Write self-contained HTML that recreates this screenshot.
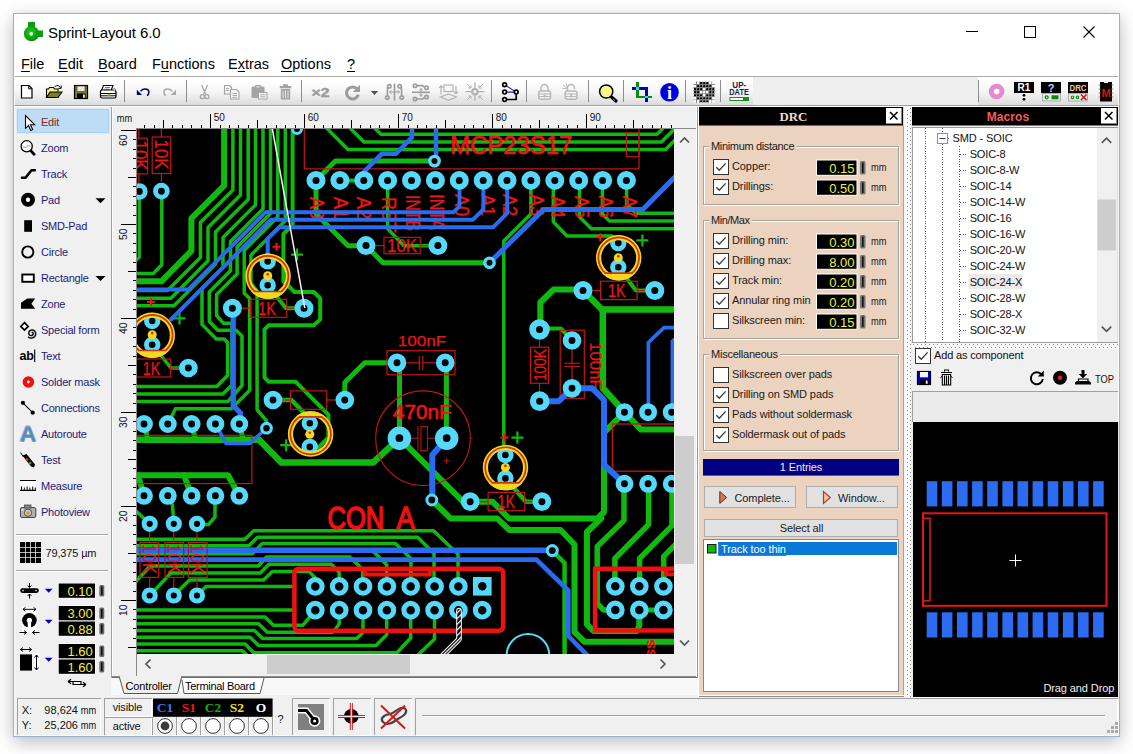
<!DOCTYPE html>
<html lang="en">
<head>
<meta charset="utf-8">
<title>Sprint-Layout 6.0</title>
<style>
html,body{margin:0;padding:0;}
body{width:1133px;height:754px;overflow:hidden;background:#fff;position:relative;
 font-family:"Liberation Sans",sans-serif;font-size:11px;color:#000;}
.abs{position:absolute;}
div,span{box-sizing:border-box;}
#shadow{position:absolute;left:14px;top:14px;width:1105px;height:722px;
 box-shadow:0 5px 17px 1px rgba(0,0,0,.27), 0 0 3px rgba(0,0,0,.10);}
#win{position:absolute;left:13px;top:13px;width:1107px;height:724px;border:1px solid #90b4e0;background:#f0f0f0;}
#title{position:absolute;left:14px;top:14px;width:1105px;height:36px;background:#fff;}
#title .cap{position:absolute;left:34px;top:9px;font-size:15px;letter-spacing:-0.1px;line-height:20px;color:#000;white-space:nowrap;}
#menu{position:absolute;left:14px;top:50px;width:1105px;height:26px;background:#fff;}
#menu span{position:absolute;top:6px;font-size:14.5px;line-height:17px;white-space:nowrap;}
#menu u{text-decoration:underline;text-underline-offset:2px;}
#toolbar{position:absolute;left:14px;top:76px;width:1105px;height:30px;
 background:linear-gradient(#fff 0,#fff 15%,#f4f4f4 55%,#dcdcdc 100%);
 border-top:1px solid #a9a9a9;border-bottom:1px solid #a0a0a0;}
</style>
</head>
<body>
<div id="shadow"></div>
<div id="win"></div>
<div id="title">
 <svg class="abs" style="left:8px;top:7px" width="24" height="22" viewBox="22 21 24 22">
  <defs><radialGradient id="gi" cx="0.45" cy="0.4" r="0.6"><stop offset="0" stop-color="#1fd01f"/><stop offset="1" stop-color="#0a8a0a"/></radialGradient></defs>
  <rect x="28" y="22" width="7" height="6" fill="#0e9a0e"/>
  <rect x="36" y="30.5" width="7" height="6.5" fill="#0e9a0e"/>
  <circle cx="31.5" cy="33.7" r="7.6" fill="url(#gi)"/>
  <circle cx="31.3" cy="33.8" r="1.9" fill="#e8ffe8"/>
 </svg>
 <div class="cap">Sprint-Layout 6.0</div>
 <svg class="abs" style="left:940px;top:0" width="165" height="36" viewBox="954 14 165 36" shape-rendering="crispEdges">
  <rect x="966" y="31" width="12" height="1" fill="#000"/>
  <rect x="1024.5" y="26.5" width="11" height="11" fill="none" stroke="#000" stroke-width="1"/>
  <path d="M1083.5 26.5 L1094.5 37.5 M1094.5 26.5 L1083.5 37.5" stroke="#000" stroke-width="1.1" fill="none" shape-rendering="geometricPrecision"/>
 </svg>
</div>
<div id="menu">
 <span style="left:7px"><u>F</u>ile</span>
 <span style="left:44px"><u>E</u>dit</span>
 <span style="left:84px"><u>B</u>oard</span>
 <span style="left:138px">F<u>u</u>nctions</span>
 <span style="left:214px">E<u>x</u>tras</span>
 <span style="left:267px"><u>O</u>ptions</span>
 <span style="left:333px"><u>?</u></span>
</div>
<div id="toolbar"></div>
<svg class="abs" style="left:14px;top:77px" width="1105" height="28" viewBox="14 77 1105 28">
 <defs>
  <linearGradient id="tbr" x1="0" y1="0" x2="0" y2="1"><stop offset="0" stop-color="#f6f6f6"/><stop offset="1" stop-color="#ececec"/></linearGradient>
 </defs>
 <rect x="753" y="77" width="225" height="28" fill="#efefef"/>
 <g stroke="#8e8e8e" stroke-width="1.4" shape-rendering="crispEdges">
  <path d="M124.5 80v22M186.5 80v22M301.5 80v22M491.5 80v22M526.5 80v22M588.5 80v22M623.5 80v22M685.5 80v22M720.5 80v22M978.5 80v22"/>
 </g>
 <!-- new -->
 <path d="M21.5 85.5h7.5l3 3v9.5h-10.500z" fill="#fff" stroke="#000" stroke-width="1.2"/>
 <path d="M28.700 85.700v3.100h3.100" fill="none" stroke="#000" stroke-width="1"/>
 <!-- open -->
 <path d="M46.500 97.500v-8.500h2l1-1.500h4l1 1.500h3.500v2.500" fill="#f4f48a" stroke="#000" stroke-width="1.100"/>
 <path d="M46.500 97.500l3.500-5.500h12l-4 5.500z" fill="#7d7d1c" stroke="#000" stroke-width="1.100"/>
 <path d="M54.500 87c1.500-2 4.500-2 6 .5M61.200 85.500v2.800h-2.800" fill="none" stroke="#000" stroke-width="1"/>
 <!-- save -->
 <rect x="74.500" y="85.500" width="13" height="13" fill="#7d7d1c" stroke="#000" stroke-width="1.200"/>
 <rect x="77" y="86" width="8" height="5.500" fill="#e8e8e8" stroke="#333" stroke-width=".6"/>
 <rect x="77" y="93.500" width="8.500" height="5" fill="#000"/>
 <rect x="83" y="94.500" width="1.800" height="3.300" fill="#e8e8e8"/>
 <!-- print -->
 <path d="M103.500 85.500h9.500l-2 5h-9.500z" fill="#fff" stroke="#000" stroke-width="1.100"/>
 <path d="M105 87.500h5M104.300 89.200h5" stroke="#555" stroke-width=".8"/>
 <path d="M100.500 91.500c0-1 .8-1.500 1.500-1.500h11.500c1.500 0 2.500 1 2.500 2v4.500c0 .8-.7 1.500-1.500 1.500h-12.500c-.8 0-1.500-.7-1.500-1.500z" fill="#fff" stroke="#000" stroke-width="1.200"/>
 <path d="M100.500 93.500h15.500M100.500 95.800h15.500" stroke="#000" stroke-width="1"/>
 <rect x="107" y="93.900" width="4" height="1.500" fill="#c8c830"/>
 <circle cx="114.300" cy="89.800" r="1.300" fill="#ddd" stroke="#444" stroke-width=".6"/>
 <!-- undo -->
 <path d="M140.500 91.200c1.500-1.500 3-2.200 4.700-2.100 2.200.1 3.700 1.500 3.700 3.200 0 1.500-.7 2.600-1.900 3.400" fill="none" stroke="#00006e" stroke-width="1.500"/>
 <path d="M136.800 89.800v5.200h5.300z" fill="#00006e"/>
 <!-- redo -->
 <path d="M172.300 91.200c-1.500-1.500-3-2.200-4.700-2.100-2.200.1-3.700 1.500-3.700 3.200 0 1.500.7 2.600 1.900 3.400" fill="none" stroke="#a8a8a8" stroke-width="1.500"/>
 <path d="M176 89.800v5.200h-5.300z" fill="#a8a8a8"/>
 <!-- cut -->
 <g fill="none" stroke="#a4a4a4" stroke-width="1.200">
  <path d="M201.700 85l4 9.500M207.500 85l-4 9.500"/>
  <circle cx="202.300" cy="96.700" r="2"/><circle cx="206.900" cy="96.700" r="2"/>
 </g>
 <!-- copy -->
 <g fill="#f4f4f4" stroke="#a4a4a4" stroke-width="1.100">
  <path d="M224.500 85.500h5l2 2v6.500h-7z"/>
  <path d="M230.500 89.500h6l2.500 2.500v7h-8.500z"/>
  <path d="M226 88.500h3M226 90.500h3M232.500 93.500h4.500M232.500 95.500h4.500M232.500 97.300h4.500" stroke-width=".9"/>
 </g>
 <!-- paste -->
 <g>
  <rect x="251.500" y="86.500" width="13" height="11.500" rx="1.500" fill="#a4a4a4"/>
  <rect x="255" y="85" width="6" height="3" rx="1" fill="#a4a4a4"/>
  <rect x="256.500" y="86.200" width="3" height="1.200" fill="#eee"/>
  <rect x="258.500" y="92.500" width="8.500" height="6.500" fill="#f4f4f4" stroke="#a4a4a4" stroke-width="1"/>
  <path d="M260.300 94.800h5M260.300 96.800h5" stroke="#a4a4a4" stroke-width=".9"/>
 </g>
 <!-- delete -->
 <g fill="#a4a4a4">
  <rect x="283" y="84.300" width="5" height="2"/>
  <rect x="279.800" y="86" width="11.400" height="2.300"/>
  <path d="M280.800 89h9.400v10.500h-9.400z"/>
  <path d="M283 90.500v7.500M285.500 90.500v7.500M288 90.500v7.500" stroke="#eee" stroke-width=".9"/>
 </g>

 <!-- x2 -->
 <text x="311.500" y="97" font-family="Liberation Sans,sans-serif" font-weight="bold" font-size="13.500" fill="#9c9c9c" stroke="#9c9c9c" stroke-width=".5" textLength="18" lengthAdjust="spacingAndGlyphs">×2</text>
 <!-- rotate -->
 <path d="M357.300 89.300a6 6 0 1 0 1 5.300" fill="none" stroke="#9c9c9c" stroke-width="3.100"/>
 <path d="M360 84.800v7.200h-7.200z" fill="#9c9c9c"/>
 <path d="M370.800 91l3.700 4 3.700-4z" fill="#555"/>
 <!-- mirror h -->
 <g fill="none" stroke="#9e9e9e" stroke-width="1.700">
  <path d="M394.500 83.500v17"/>
  <circle cx="389.300" cy="86.300" r="1.700"/><circle cx="387.300" cy="97.500" r="1.700"/>
  <circle cx="399.700" cy="86.300" r="1.700"/><circle cx="401.700" cy="97.500" r="1.700"/>
  <path d="M387.600 87.500l-.3 8.300M401.400 87.500l.3 8.300" />
  <path d="M389.500 92h10M389.500 92l2-1.700M389.500 92l2 1.700M399.500 92l-2-1.700M399.500 92l-2 1.700" stroke-width="1"/>
 </g>
 <!-- mirror v -->
 <g fill="none" stroke="#9e9e9e" stroke-width="1.700">
  <path d="M412 92.300h18"/>
  <circle cx="415" cy="85.700" r="1.700"/><circle cx="426.500" cy="87.700" r="1.700"/>
  <circle cx="415" cy="99" r="1.700"/><circle cx="426.500" cy="97" r="1.700"/>
  <path d="M416.700 85.700h6l2 1.500M416.700 99h6l2-1.500"/>
  <path d="M421 88.500v7.800M421 88.500l-1.700 2M421 88.500l1.700 2M421 96.300l-1.700-2M421 96.300l1.700-2" stroke-width="1"/>
 </g>
 <!-- send back -->
 <g fill="none" stroke="#b4b4b4" stroke-width="1.200">
  <rect x="444" y="85" width="9" height="6.500"/>
  <path d="M448.500 94l8 3-8 3.300-8-3.300z"/>
  <path d="M441 94.500v-9M441 85.500l-2 2.500M441 85.500l2 2.500M456 86v8M456 94l-2-2.500M456 94l2-2.500"/>
 </g>
 <!-- snap -->
 <g fill="none" stroke="#b0b0b0" stroke-width="1.300">
  <path d="M474.900 82.500v6M474.900 95v6M465.500 91.700h6M478.300 91.700h6"/>
  <circle cx="474.900" cy="91.700" r="2.700" stroke-width="2.200"/>
  <path d="M467 84l4 4M471 88v-2.800M471 88h-2.800M483 84l-4 4M479 88v-2.800M479 88h2.800M467 100l4-4M471 96v2.800M471 96h-2.800M483 100l-4-4M479 96v2.800M479 96h2.800" stroke-width="1"/>
 </g>
 <!-- connections -->
 <g fill="none">
  <path d="M504.600 84.800l11.600 7.300M504.600 92.100h11.600" stroke="#2222b0" stroke-width="1.100"/>
  <path d="M504.600 99.500h11.600v-7.400" stroke="#000" stroke-width="1.700"/>
  <g stroke="#000" stroke-width="1.700" fill="#fff">
  <circle cx="504.600" cy="84.800" r="1.900"/><circle cx="504.600" cy="92.100" r="1.900"/><circle cx="504.600" cy="99.500" r="1.900"/><circle cx="516.200" cy="92.100" r="1.900"/></g>
 </g>
 <!-- lock -->
 <g fill="none" stroke="#b8b8b8" stroke-width="1.500">
  <path d="M541 91v-3a3.500 3.500 0 0 1 7 0v3"/>
  <rect x="538.700" y="91" width="11.800" height="8.300" rx="2" fill="#f2f2f2"/>
  <path d="M539 94h11M539 96.500h11" stroke-width="1"/>
  <path d="M544.600 93.500v4" stroke-width="1.600"/>
 </g>
 <g fill="none" stroke="#b8b8b8" stroke-width="1.500">
  <path d="M567.500 91v-3a3.500 3.500 0 0 1 7 0v1"/>
  <rect x="565.200" y="91" width="11.800" height="8.300" rx="2" fill="#f2f2f2"/>
  <path d="M565.500 94h11M565.500 96.500h11" stroke-width="1"/>
  <path d="M571.100 93.500v4" stroke-width="1.600"/>
  <path d="M563 85l4 3M566 83.500l1.500 4M562.500 88.500h4" stroke-width="1"/>
 </g>
 <!-- magnifier -->
 <path d="M611.500 97l4.500 4" stroke="#000" stroke-width="3.200" stroke-linecap="round"/>
 <path d="M612.800 98.700l2.200 2" stroke="#aaa" stroke-width=".8"/>
 <circle cx="606.200" cy="91.500" r="6.600" fill="#f6f68c" stroke="#000" stroke-width="1.500"/>
 <!-- crop -->
 <g fill="none" stroke-width="2.700" shape-rendering="crispEdges">
  <path d="M637.700 82v15h14" stroke="#0a8a14"/>
  <path d="M632 88.500h14.500v13" stroke="#0000d0"/>
  <rect x="636.300" y="87.100" width="2.800" height="2.800" fill="#20e0f0" stroke="none"/>
  <rect x="645.100" y="95.600" width="2.800" height="2.800" fill="#20e0f0" stroke="none"/>
 </g>
 <!-- info -->
 <circle cx="669.500" cy="92.300" r="9.300" fill="#0000e6"/>
 <text x="669.600" y="99" text-anchor="middle" font-family="Liberation Serif,serif" font-weight="bold" font-size="18" fill="#fff">i</text>
 <!-- dotted disc -->
 <rect x="693.300" y="81.300" width="21.700" height="21.700" rx="3" fill="#fff"/>
 <path d="M696.52 81.40V102.90M693.40 84.53H714.90M699.58 81.40V102.90M693.40 87.58H714.90M702.62 81.40V102.90M693.40 90.62H714.90M705.67 81.40V102.90M693.40 93.67H714.90M708.73 81.40V102.90M693.40 96.72H714.90M711.77 81.40V102.90M693.40 99.78H714.90" stroke="#808080" stroke-width="1"/>
 <rect x="693.95" y="81.95" width="2.100" height="2.100" fill="#fff"/><rect x="697.00" y="81.95" width="2.100" height="2.100" fill="#fff"/><rect x="700.05" y="81.95" width="2.100" height="2.100" rx=".4" fill="#000"/><rect x="703.10" y="81.95" width="2.100" height="2.100" rx=".4" fill="#000"/><rect x="706.15" y="81.95" width="2.100" height="2.100" rx=".4" fill="#000"/><rect x="709.20" y="81.95" width="2.100" height="2.100" fill="#fff"/><rect x="712.25" y="81.95" width="2.100" height="2.100" fill="#fff"/><rect x="693.95" y="85.00" width="2.100" height="2.100" fill="#fff"/><rect x="697.00" y="85.00" width="2.100" height="2.100" rx=".4" fill="#000"/><rect x="700.05" y="85.00" width="2.100" height="2.100" rx=".4" fill="#000"/><rect x="703.10" y="85.00" width="2.100" height="2.100" rx=".4" fill="#000"/><rect x="706.15" y="85.00" width="2.100" height="2.100" rx=".4" fill="#000"/><rect x="709.20" y="85.00" width="2.100" height="2.100" rx=".4" fill="#000"/><rect x="712.25" y="85.00" width="2.100" height="2.100" fill="#fff"/><rect x="693.95" y="88.05" width="2.100" height="2.100" rx=".4" fill="#000"/><rect x="697.00" y="88.05" width="2.100" height="2.100" rx=".4" fill="#000"/><rect x="700.05" y="88.05" width="2.100" height="2.100" rx=".4" fill="#000"/><rect x="703.10" y="88.05" width="2.100" height="2.100" fill="#fff"/><rect x="706.15" y="88.05" width="2.100" height="2.100" rx=".4" fill="#000"/><rect x="709.20" y="88.05" width="2.100" height="2.100" rx=".4" fill="#000"/><rect x="712.25" y="88.05" width="2.100" height="2.100" rx=".4" fill="#000"/><rect x="693.95" y="91.10" width="2.100" height="2.100" rx=".4" fill="#000"/><rect x="697.00" y="91.10" width="2.100" height="2.100" rx=".4" fill="#000"/><rect x="700.05" y="91.10" width="2.100" height="2.100" fill="#fff"/><rect x="703.10" y="91.10" width="2.100" height="2.100" fill="#fff"/><rect x="706.15" y="91.10" width="2.100" height="2.100" fill="#fff"/><rect x="709.20" y="91.10" width="2.100" height="2.100" rx=".4" fill="#000"/><rect x="712.25" y="91.10" width="2.100" height="2.100" rx=".4" fill="#000"/><rect x="693.95" y="94.15" width="2.100" height="2.100" rx=".4" fill="#000"/><rect x="697.00" y="94.15" width="2.100" height="2.100" rx=".4" fill="#000"/><rect x="700.05" y="94.15" width="2.100" height="2.100" rx=".4" fill="#000"/><rect x="703.10" y="94.15" width="2.100" height="2.100" fill="#fff"/><rect x="706.15" y="94.15" width="2.100" height="2.100" rx=".4" fill="#000"/><rect x="709.20" y="94.15" width="2.100" height="2.100" rx=".4" fill="#000"/><rect x="712.25" y="94.15" width="2.100" height="2.100" rx=".4" fill="#000"/><rect x="693.95" y="97.20" width="2.100" height="2.100" fill="#fff"/><rect x="697.00" y="97.20" width="2.100" height="2.100" rx=".4" fill="#000"/><rect x="700.05" y="97.20" width="2.100" height="2.100" rx=".4" fill="#000"/><rect x="703.10" y="97.20" width="2.100" height="2.100" rx=".4" fill="#000"/><rect x="706.15" y="97.20" width="2.100" height="2.100" rx=".4" fill="#000"/><rect x="709.20" y="97.20" width="2.100" height="2.100" rx=".4" fill="#000"/><rect x="712.25" y="97.20" width="2.100" height="2.100" fill="#fff"/><rect x="693.95" y="100.25" width="2.100" height="2.100" fill="#fff"/><rect x="697.00" y="100.25" width="2.100" height="2.100" fill="#fff"/><rect x="700.05" y="100.25" width="2.100" height="2.100" rx=".4" fill="#000"/><rect x="703.10" y="100.25" width="2.100" height="2.100" rx=".4" fill="#000"/><rect x="706.15" y="100.25" width="2.100" height="2.100" rx=".4" fill="#000"/><rect x="709.20" y="100.25" width="2.100" height="2.100" fill="#fff"/><rect x="712.25" y="100.25" width="2.100" height="2.100" fill="#fff"/>
 <!-- update -->
 <g font-family="Liberation Sans,sans-serif" font-weight="bold" font-size="8.300" fill="#1a1a50">
  <text x="732.300" y="88.300" textLength="14" lengthAdjust="spacingAndGlyphs">UP-</text>
  <text x="729.300" y="95" textLength="19.500" lengthAdjust="spacingAndGlyphs">DATE</text>
 </g>
 <rect x="729.500" y="97" width="19.500" height="4" fill="#1a8a1a"/>
 <rect x="730.500" y="98" width="12.500" height="2" fill="#fff"/>
 <!-- right group -->
 <circle cx="996.600" cy="91.500" r="5.300" fill="#fff" stroke="#e58ad0" stroke-width="5"/>
 <rect x="1014" y="82" width="20" height="11" fill="#000"/>
 <text x="1024" y="91.300" text-anchor="middle" font-family="Liberation Sans,sans-serif" font-weight="bold" font-size="10" fill="#fff">R1</text>
 <circle cx="1024" cy="95.300" r="1.400" fill="#000"/><circle cx="1024" cy="99.300" r="1.400" fill="#000"/>
 <rect x="1041" y="82" width="20" height="11" fill="#000"/>
 <text x="1051" y="91.800" text-anchor="middle" font-family="Liberation Sans,sans-serif" font-weight="bold" font-size="11" fill="#bcd4ff">?</text>
 <rect x="1042.500" y="93.500" width="18" height="7.500" fill="#e8e8e8" stroke="#888" stroke-width=".6"/>
 <circle cx="1046.700" cy="97.300" r="1.500" fill="none" stroke="#0a8a0a" stroke-width="1.300"/>
 <rect x="1051.500" y="95.300" width="7" height="4" fill="#0a8a0a"/>
 <rect x="1068" y="82" width="20" height="11" fill="#000"/>
 <text x="1078" y="91.300" text-anchor="middle" font-family="Liberation Sans,sans-serif" font-weight="bold" font-size="9.500" fill="#f0c890" textLength="17" lengthAdjust="spacingAndGlyphs">DRC</text>
 <rect x="1068.500" y="93.500" width="19" height="7.500" fill="#e8e8e8" stroke="#888" stroke-width=".6"/>
 <circle cx="1072.500" cy="97.300" r="1.300" fill="none" stroke="#0a8a0a" stroke-width="1.100"/>
 <circle cx="1077.500" cy="97.300" r="1.300" fill="none" stroke="#0a8a0a" stroke-width="1.100"/>
 <path d="M1081 94.500l5.500 5.500M1086.500 94.500l-5.500 5.500" stroke="#d01010" stroke-width="1.600"/>
 <rect x="1100" y="82" width="12" height="19.500" fill="#000"/>
 <rect x="1104" y="81" width="4" height="2" fill="#f0f0f0"/>
 <path d="M1098.500 85h2M1098.500 89h2M1098.500 93h2M1098.500 97h2M1111.500 85h2M1111.500 89h2M1111.500 93h2M1111.500 97h2" stroke="#999" stroke-width="1"/>
 <text x="1106" y="96.500" text-anchor="middle" font-family="Liberation Sans,sans-serif" font-weight="bold" font-size="11" fill="#e01010">M</text>
</svg>
<svg class="abs" style="left:14px;top:106px" width="98" height="630" viewBox="14 106 98 630" font-family="Liberation Sans,sans-serif" font-size="11">
<rect x="16.500" y="108.500" width="93" height="25" fill="#bddcf5" stroke="#dcedfa" stroke-width="1"/>
<rect x="17.500" y="109.500" width="91" height="23" fill="none" stroke="#a9d0ef" stroke-width="1"/>
<text x="41" y="126" fill="#8a2626" letter-spacing="-0.22">Edit</text>
<text x="41" y="152" fill="#1c1c78" letter-spacing="-0.22">Zoom</text>
<text x="41" y="178" fill="#1c1c78" letter-spacing="-0.22">Track</text>
<text x="41" y="204" fill="#1c1c78" letter-spacing="-0.22">Pad</text>
<text x="41" y="230" fill="#1c1c78" letter-spacing="-0.22">SMD-Pad</text>
<text x="41" y="256" fill="#1c1c78" letter-spacing="-0.22">Circle</text>
<text x="41" y="282" fill="#1c1c78" letter-spacing="-0.22">Rectangle</text>
<text x="41" y="308" fill="#1c1c78" letter-spacing="-0.22">Zone</text>
<text x="41" y="334" fill="#1c1c78" letter-spacing="-0.22">Special form</text>
<text x="41" y="360" fill="#1c1c78" letter-spacing="-0.22">Text</text>
<text x="41" y="386" fill="#1c1c78" letter-spacing="-0.22">Solder mask</text>
<text x="41" y="412" fill="#1c1c78" letter-spacing="-0.22">Connections</text>
<text x="41" y="438" fill="#1c1c78" letter-spacing="-0.22">Autoroute</text>
<text x="41" y="464" fill="#1c1c78" letter-spacing="-0.22">Test</text>
<text x="41" y="490" fill="#1c1c78" letter-spacing="-0.22">Measure</text>
<text x="41" y="516" fill="#1c1c78" letter-spacing="-0.22">Photoview</text>
<path d="M25.500 115.500v12.800l3-2.800 2.300 5 1.900-.9-2.300-4.900h4.300z" fill="#fff" stroke="#000" stroke-width="1.100" stroke-linejoin="miter"/>
<path d="M30.800 150.800l3.300 3.400" stroke="#000" stroke-width="2.800" stroke-linecap="round"/>
<circle cx="26.700" cy="146.300" r="5.600" fill="#fff" stroke="#000" stroke-width="1.300"/>
<path d="M22.800 147.500c1-2 2.500 1 3.800-.5s2.500-1.500 3.800-1" fill="none" stroke="#888" stroke-width="1"/>
<path d="M22 177.800h3.500l6-7.500h3.300" fill="none" stroke="#000" stroke-width="2.600" stroke-linecap="round" stroke-linejoin="round"/>
<circle cx="28" cy="199.800" r="4.600" fill="#fff" stroke="#000" stroke-width="4.800"/>
<path d="M95.500 198.300h10l-5 5z" fill="#000"/>
<rect x="24.200" y="220.200" width="7.800" height="11.600" fill="#000"/>
<circle cx="27.800" cy="252" r="5.600" fill="none" stroke="#000" stroke-width="1.900"/>
<rect x="22.300" y="274.500" width="11.500" height="7.300" fill="#fff" stroke="#000" stroke-width="1.900"/>
<path d="M95.500 276h10l-5 5z" fill="#000"/>
<path d="M21 308.800v-6l6.200-4.300h8l-3.800 5.300 3.800 5z" fill="#000"/>
<path d="M24.500 322.700l3.700 3.700-3.700 3.700-3.700-3.700z" fill="#fff" stroke="#000" stroke-width="1.700"/>
<path d="M31.5 332.5L31.7 332.4L32.0 332.4L32.3 332.4L32.6 332.6L32.9 332.8L33.1 333.1L33.2 333.5L33.2 334.0L33.1 334.4L32.9 334.9L32.5 335.2L32.0 335.5L31.4 335.6L30.8 335.6L30.2 335.4L29.7 335.1L29.2 334.6L28.9 334.0L28.8 333.2L28.8 332.5L29.0 331.7L29.5 331.1L30.1 330.5L30.9 330.1L31.7 329.9L32.6 330.0L33.5 330.3L34.3 330.8L35.0 331.6L35.5 332.5L35.7 333.5L35.6 334.6L35.3 335.6L34.7 336.5L33.8 337.3L32.7 337.8L31.6 338.1L30.3 338.0L29.1 337.6L28.1 336.9" fill="none" stroke="#111" stroke-width="1.500"/>
<text x="19.500" y="360.300" font-weight="bold" font-size="12.500" fill="#000" letter-spacing="-0.3">ab</text>
<path d="M34.700 349.500v12.500" stroke="#000" stroke-width="1.100"/>
<circle cx="28.400" cy="382" r="3.600" fill="#fff" stroke="#f01010" stroke-width="4.400"/>
<path d="M22.900 402.800l9.800 9.900" stroke="#000" stroke-width="1.100"/>
<circle cx="22.900" cy="402.800" r="2.100" fill="#000"/><circle cx="32.700" cy="412.700" r="2.100" fill="#000"/>
<text x="19.300" y="441.200" font-weight="bold" font-size="22" fill="#5f8fbe" stroke="#8fb7dc" stroke-width=".8" textLength="17" lengthAdjust="spacingAndGlyphs">A</text>
<text x="20.300" y="441.600" font-weight="bold" font-size="22" fill="#5585b4" textLength="16" lengthAdjust="spacingAndGlyphs" opacity=".7">A</text>
<path d="M20.500 452.500l3 4.500" stroke="#000" stroke-width="1"/>
<path d="M22.500 455.500l4-1.500 8.500 10.500-1 3-3-1z" fill="#000"/>
<circle cx="27" cy="459.500" r="1.500" fill="#e03030"/><circle cx="30" cy="463" r="1.500" fill="#20a040"/>
<rect x="20" y="480.500" width="16" height="9.500" fill="#fff"/>
<path d="M20 480.500h16M20 490.300h16" stroke="#000" stroke-width="1.200"/>
<path d="M21.500 490v-3.500M24.300 490v-2.500M27.100 490v-3.500M29.900 490v-2.500M32.700 490v-3.500M35.300 490v-2.500" stroke="#000" stroke-width="1"/>
<rect x="20.500" y="507.500" width="15.300" height="10" rx="1.500" fill="#b0b0b0" stroke="#444" stroke-width="1"/>
<rect x="24.500" y="505" width="6.500" height="3" fill="#888" stroke="#444" stroke-width=".8"/>
<circle cx="28" cy="512.700" r="3.600" fill="#d8d8d8" stroke="#444" stroke-width="1"/>
<circle cx="28" cy="512.900" r="1.800" fill="#e89020"/>
<rect x="21.500" y="509" width="2" height="1.500" fill="#eee"/>
<rect x="16" y="534" width="92" height="1" fill="#a6a6a6"/><rect x="16" y="535" width="92" height="1" fill="#fff"/>
<rect x="16" y="570" width="92" height="1" fill="#a6a6a6"/><rect x="16" y="571" width="92" height="1" fill="#fff"/>
<rect x="20" y="542" width="21" height="21" fill="#000"/>
<path d="M25.500 542v21M30.500 542v21M35.500 542v21M20 547.500h21M20 552.500h21M20 557.500h21" stroke="#fff" stroke-width=".7"/>
<text x="45.500" y="557" fill="#111" font-size="11" letter-spacing="-0.15">79,375 µm</text>
<rect x="58" y="583.0" width="37.500" height="15.500" fill="#fff"/>
<rect x="58.700" y="583.5" width="36.300" height="14.300" fill="#000"/>
<text x="92.800" y="595.5" text-anchor="end" font-size="13" fill="#f2f244">0.10</text>
<rect x="99.300" y="585.0" width="5" height="11.500" rx="1.500" fill="#6a6a6a"/>
<rect x="101" y="586.5" width="1.600" height="8.500" fill="#111"/>
<rect x="58" y="605.5" width="37.500" height="15.500" fill="#fff"/>
<rect x="58.700" y="606" width="36.300" height="14.300" fill="#000"/>
<text x="92.800" y="618" text-anchor="end" font-size="13" fill="#f2f244">3.00</text>
<rect x="99.300" y="607.5" width="5" height="11.500" rx="1.500" fill="#6a6a6a"/>
<rect x="101" y="609" width="1.600" height="8.500" fill="#111"/>
<rect x="58" y="621.0" width="37.500" height="15.500" fill="#fff"/>
<rect x="58.700" y="621.5" width="36.300" height="14.300" fill="#000"/>
<text x="92.800" y="633.5" text-anchor="end" font-size="13" fill="#f2f244">0.88</text>
<rect x="99.300" y="623.0" width="5" height="11.500" rx="1.500" fill="#6a6a6a"/>
<rect x="101" y="624.5" width="1.600" height="8.500" fill="#111"/>
<rect x="58" y="643.5" width="37.500" height="15.500" fill="#fff"/>
<rect x="58.700" y="644" width="36.300" height="14.300" fill="#000"/>
<text x="92.800" y="656" text-anchor="end" font-size="13" fill="#f2f244">1.60</text>
<rect x="99.300" y="645.5" width="5" height="11.500" rx="1.500" fill="#6a6a6a"/>
<rect x="101" y="647" width="1.600" height="8.500" fill="#111"/>
<rect x="58" y="659.0" width="37.500" height="15.500" fill="#fff"/>
<rect x="58.700" y="659.5" width="36.300" height="14.300" fill="#000"/>
<text x="92.800" y="671.5" text-anchor="end" font-size="13" fill="#f2f244">1.60</text>
<rect x="99.300" y="661.0" width="5" height="11.500" rx="1.500" fill="#6a6a6a"/>
<rect x="101" y="662.5" width="1.600" height="8.500" fill="#111"/>
<path d="M44.800 588.8h7.800l-3.900 4z" fill="#0000d0"/>
<path d="M44.800 619.8h7.800l-3.900 4z" fill="#0000d0"/>
<path d="M44.800 657.8h7.800l-3.900 4z" fill="#0000d0"/>
<rect x="20.200" y="588.300" width="18.600" height="4.600" rx="2.300" fill="#000"/>
<circle cx="23" cy="590.600" r=".8" fill="#fff"/><circle cx="36" cy="590.600" r=".8" fill="#fff"/>
<path d="M29.500 583v4.500M29.500 598.500v-4.500M27.500 585.500l2 2 2-2M27.500 596l2-2 2 2" fill="none" stroke="#000" stroke-width="1"/>
<rect x="22.300" y="607" width="14" height="25" fill="#fff"/>
<circle cx="29.400" cy="620.300" r="7.300" fill="#000"/>
<circle cx="29.400" cy="620.300" r="2.600" fill="#fff"/><rect x="27.700" y="620.300" width="3.400" height="8" fill="#fff"/>
<path d="M23 609.300h13M23 609.300l2.500-2M23 609.300l2.500 2M36 609.300l-2.500-2M36 609.300l-2.500 2" stroke="#000" stroke-width="1" fill="none"/>
<path d="M19.500 632.500h7M26.500 632.500l-2.500-2M26.500 632.500l-2.500 2M39.500 632.500h-7M32.500 632.500l2.500-2M32.500 632.500l2.500 2" stroke="#000" stroke-width="1" fill="none"/>
<rect x="34" y="653" width="5.500" height="18" fill="#fff"/>
<rect x="20" y="654.400" width="12" height="16.200" fill="#000"/>
<path d="M20.500 649.500h11M20.500 649.500l2.500-2M20.500 649.500l2.500 2M31.500 649.500l-2.500-2M31.500 649.500l-2.500 2" stroke="#000" stroke-width="1" fill="none"/>
<path d="M36.500 655v15M36.500 655l-2 2.500M36.500 655l2 2.500M36.500 670l-2-2.500M36.500 670l2-2.500" stroke="#000" stroke-width="1" fill="none"/>
<path d="M68 681.500h13v3.500M68 681.500l3-2.200M68 681.500l3 2.200M86 684.500h-13v-3M86 684.500l-3-2.200M86 684.500l-3 2.200" stroke="#000" stroke-width="1.200" fill="none"/>
<rect x="17" y="698" width="1" height="38" fill="#a0a0a0"/><rect x="17" y="698" width="84" height="1" fill="#a0a0a0"/>
<rect x="100" y="699" width="1" height="37" fill="#fff"/>
<text x="21.700" y="714" fill="#111">X:</text><text x="21.700" y="728.500" fill="#111">Y:</text>
<text x="78" y="714" fill="#111" text-anchor="end">98,624</text><text x="78" y="728.500" fill="#111" text-anchor="end">25,206</text>
<text x="80.700" y="714" fill="#111" textLength="15.500" lengthAdjust="spacingAndGlyphs">mm</text><text x="80.700" y="728.500" fill="#111" textLength="15.500" lengthAdjust="spacingAndGlyphs">mm</text>
</svg>
<svg class="abs" style="left:111px;top:106px" width="587" height="630" viewBox="111 106 587 630" font-family="Liberation Sans,sans-serif" font-size="11">
<rect x="111" y="107" width="1" height="571" fill="#a0a0a0"/><rect x="112" y="107" width="1" height="570" fill="#fff"/>
<rect x="111" y="678" width="587" height="17" fill="#f8f8f8"/>
<rect x="111" y="676" width="587" height="1" fill="#8c8c8c"/><rect x="111" y="677" width="587" height="1" fill="#6e6e6e"/>
<rect x="696" y="107" width="1" height="570" fill="#fff"/><rect x="697" y="107" width="1" height="571" fill="#9a9a9a"/>
<text x="213.8" y="121" font-size="10" fill="#111">50</text>
<text x="307.8" y="121" font-size="10" fill="#111">60</text>
<text x="401.8" y="121" font-size="10" fill="#111">70</text>
<text x="495.8" y="121" font-size="10" fill="#111">80</text>
<text x="589.8" y="121" font-size="10" fill="#111">90</text>
<path d="M144.5 124.5V128M154.5 124.5V128M163.5 120V128M172.5 124.5V128M182.5 124.5V128M191.5 124.5V128M201.5 124.5V128M210.5 114V128M220.5 124.5V128M229.5 124.5V128M238.5 124.5V128M248.5 124.5V128M257.5 120V128M266.5 124.5V128M276.5 124.5V128M285.5 124.5V128M295.5 124.5V128M304.5 114V128M314.5 124.5V128M323.5 124.5V128M332.5 124.5V128M342.5 124.5V128M351.5 120V128M360.5 124.5V128M370.5 124.5V128M379.5 124.5V128M389.5 124.5V128M398.5 114V128M408.5 124.5V128M417.5 124.5V128M426.5 124.5V128M436.5 124.5V128M445.5 120V128M454.5 124.5V128M464.5 124.5V128M473.5 124.5V128M483.5 124.5V128M492.5 114V128M502.5 124.5V128M511.5 124.5V128M520.5 124.5V128M530.5 124.5V128M539.5 120V128M548.5 124.5V128M558.5 124.5V128M567.5 124.5V128M577.5 124.5V128M586.5 114V128M596.5 124.5V128M605.5 124.5V128M614.5 124.5V128M624.5 124.5V128M633.5 120V128M642.5 124.5V128M652.5 124.5V128M661.5 124.5V128M671.5 124.5V128" stroke="#000" stroke-width="1" shape-rendering="crispEdges"/>
<text x="116.800" y="121.600" font-size="10.500" fill="#111" textLength="15.300" lengthAdjust="spacingAndGlyphs">mm</text>
<text transform="translate(127.300 604.5) rotate(-90)" text-anchor="end" font-size="10.300" fill="#111">10</text>
<text transform="translate(127.300 510.5) rotate(-90)" text-anchor="end" font-size="10.300" fill="#111">20</text>
<text transform="translate(127.300 416.5) rotate(-90)" text-anchor="end" font-size="10.300" fill="#111">30</text>
<text transform="translate(127.300 322.5) rotate(-90)" text-anchor="end" font-size="10.300" fill="#111">40</text>
<text transform="translate(127.300 228.5) rotate(-90)" text-anchor="end" font-size="10.300" fill="#111">50</text>
<text transform="translate(127.300 134.5) rotate(-90)" text-anchor="end" font-size="10.300" fill="#111">60</text>
<path d="M128 647.5H136M132.5 638.5H136M132.5 628.5H136M132.5 619.5H136M132.5 609.5H136M120.5 600.5H136M132.5 591.5H136M132.5 581.5H136M132.5 572.5H136M132.5 562.5H136M128 553.5H136M132.5 544.5H136M132.5 534.5H136M132.5 525.5H136M132.5 515.5H136M120.5 506.5H136M132.5 497.5H136M132.5 487.5H136M132.5 478.5H136M132.5 468.5H136M128 459.5H136M132.5 450.5H136M132.5 440.5H136M132.5 431.5H136M132.5 421.5H136M120.5 412.5H136M132.5 403.5H136M132.5 393.5H136M132.5 384.5H136M132.5 374.5H136M128 365.5H136M132.5 356.5H136M132.5 346.5H136M132.5 337.5H136M132.5 327.5H136M120.5 318.5H136M132.5 309.5H136M132.5 299.5H136M132.5 290.5H136M132.5 280.5H136M128 271.5H136M132.5 262.5H136M132.5 252.5H136M132.5 243.5H136M132.5 233.5H136M120.5 224.5H136M132.5 215.5H136M132.5 205.5H136M132.5 196.5H136M132.5 186.5H136M128 177.5H136M132.5 168.5H136M132.5 158.5H136M132.5 149.5H136M132.5 139.5H136M120.5 130.5H136" stroke="#000" stroke-width="1" shape-rendering="crispEdges"/>
<rect x="136" y="128" width="560" height="1" fill="#8a8a8a"/><rect x="136" y="128" width="1" height="548" fill="#8a8a8a"/>
<rect x="674" y="129" width="22" height="525" fill="#f0f0f0"/>
<rect x="137" y="654" width="537" height="22" fill="#f0f0f0"/>
<rect x="675" y="436" width="19" height="128" fill="#cdcdcd"/>
<rect x="267" y="655" width="143" height="19" fill="#cdcdcd"/>
<path d="M680 142.500l4.500-4.500 4.500 4.500M680 640.500l4.500 4.500 4.500-4.500M150.500 659.500l-4.500 4.500 4.500 4.500M660.500 659.500l4.500 4.500-4.500 4.500" fill="none" stroke="#555" stroke-width="1.700"/>
<path d="M111 677.500H119.500L124 693.500H177.500L181.500 677.500" fill="#f0f0f0" stroke="none"/>
<path d="M182 678H264L260 693.500H184.500L181 680z" fill="#fff"/>
<path d="M119.500 677.500L124 693.500H177.500L181.500 677.500" fill="none" stroke="#555" stroke-width="1"/>
<path d="M182 680l2 13.500H260L264 678" fill="none" stroke="#555" stroke-width="1"/>
<rect x="120" y="676" width="61" height="2" fill="#f0f0f0"/>
<rect x="111" y="676" width="1" height="2" fill="#a0a0a0"/>
<text x="125.500" y="690" fill="#000" letter-spacing="-0.15">Controller</text>
<text x="185" y="690" fill="#000" letter-spacing="-0.3">Terminal Board</text>
</svg>
<svg class="abs" style="left:101px;top:695px" width="1018" height="41" viewBox="101 695 1018 41" font-family="Liberation Sans,sans-serif" font-size="11">
<rect x="101" y="695" width="1018" height="2" fill="#f0f0f0"/>
<rect x="104" y="698" width="48" height="1" fill="#a0a0a0"/><rect x="104" y="698" width="1" height="19" fill="#a0a0a0"/><rect x="151" y="699" width="1" height="18" fill="#fff"/><rect x="105" y="716" width="47" height="1" fill="#fff"/>
<rect x="104" y="717" width="48" height="1" fill="#a0a0a0"/><rect x="104" y="717" width="1" height="19" fill="#a0a0a0"/><rect x="151" y="718" width="1" height="18" fill="#fff"/><rect x="105" y="735" width="47" height="1" fill="#fff"/>
<text x="112.700" y="710.600" fill="#111" letter-spacing="-0.15">visible</text><text x="112.700" y="729.600" fill="#111" letter-spacing="-0.15">active</text>
<rect x="153" y="698.500" width="119.600" height="18.300" fill="#000"/>
<text x="165.0" y="711.500" text-anchor="middle" font-family="Liberation Serif,serif" font-weight="bold" font-size="13.500" fill="#3a78f0">C1</text>
<rect x="176.0" y="717" width="1" height="19" fill="#a0a0a0"/><rect x="177.0" y="717" width="1" height="19" fill="#fff"/>
<circle cx="165.0" cy="726" r="7.400" fill="#fff" stroke="#333" stroke-width="1"/>
<text x="189.0" y="711.500" text-anchor="middle" font-family="Liberation Serif,serif" font-weight="bold" font-size="13.500" fill="#f01818">S1</text>
<rect x="200.0" y="717" width="1" height="19" fill="#a0a0a0"/><rect x="201.0" y="717" width="1" height="19" fill="#fff"/>
<circle cx="189.0" cy="726" r="7.400" fill="#fff" stroke="#333" stroke-width="1"/>
<text x="213.0" y="711.500" text-anchor="middle" font-family="Liberation Serif,serif" font-weight="bold" font-size="13.500" fill="#18a818">C2</text>
<rect x="224.0" y="717" width="1" height="19" fill="#a0a0a0"/><rect x="225.0" y="717" width="1" height="19" fill="#fff"/>
<circle cx="213.0" cy="726" r="7.400" fill="#fff" stroke="#333" stroke-width="1"/>
<text x="237.0" y="711.500" text-anchor="middle" font-family="Liberation Serif,serif" font-weight="bold" font-size="13.500" fill="#f0e020">S2</text>
<rect x="248.0" y="717" width="1" height="19" fill="#a0a0a0"/><rect x="249.0" y="717" width="1" height="19" fill="#fff"/>
<circle cx="237.0" cy="726" r="7.400" fill="#fff" stroke="#333" stroke-width="1"/>
<text x="261.0" y="711.500" text-anchor="middle" font-family="Liberation Serif,serif" font-weight="bold" font-size="13.500" fill="#fff">O</text>
<rect x="272.0" y="717" width="1" height="19" fill="#a0a0a0"/><rect x="273.0" y="717" width="1" height="19" fill="#fff"/>
<circle cx="261.0" cy="726" r="7.400" fill="#fff" stroke="#333" stroke-width="1"/>
<rect x="152" y="717" width="1" height="19" fill="#a0a0a0"/>
<circle cx="165" cy="726" r="4.400" fill="#3a3a3a"/>
<text x="277.500" y="722.500" fill="#111">?</text>
<rect x="292" y="698" width="38" height="1" fill="#a0a0a0"/><rect x="292" y="698" width="1" height="38" fill="#a0a0a0"/><rect x="329" y="699" width="1" height="37" fill="#fff"/><rect x="293" y="735" width="37" height="1" fill="#fff"/>
<rect x="333" y="698" width="38" height="1" fill="#a0a0a0"/><rect x="333" y="698" width="1" height="38" fill="#a0a0a0"/><rect x="370" y="699" width="1" height="37" fill="#fff"/><rect x="334" y="735" width="37" height="1" fill="#fff"/>
<rect x="374" y="698" width="38" height="1" fill="#a0a0a0"/><rect x="374" y="698" width="1" height="38" fill="#a0a0a0"/><rect x="411" y="699" width="1" height="37" fill="#fff"/><rect x="375" y="735" width="37" height="1" fill="#fff"/>
<rect x="298" y="704" width="26" height="26" fill="#808080"/>
<path d="M298 710.500h8.500l8 10" fill="none" stroke="#fff" stroke-width="6"/><circle cx="314.600" cy="721" r="5.800" fill="#fff"/>
<path d="M298 710.500h8.500l8 10" fill="none" stroke="#000" stroke-width="3"/><circle cx="314.600" cy="721" r="2.800" fill="#fff" stroke="#000" stroke-width="2.600"/>
<circle cx="351.300" cy="716.400" r="7.300" fill="#000"/>
<path d="M351.300 703v27M338 716.400h27" stroke="#d81010" stroke-width="3"/>
<path d="M351.300 703v27M338 716.400h27" stroke="#fff" stroke-width="1"/>
<path d="M383 722c-3-3 0-7 7-8 5-1 7-5 11-6 5-1 7 3 3 7-3 3-6 3-9 6-4 3-9 4-12 1z" fill="none" stroke="#444" stroke-width="2.200"/>
<path d="M381 705.500l24 23M405 705.500l-24 23" stroke="#d81818" stroke-width="2"/>
<rect x="415" y="698" width="703" height="1" fill="#a0a0a0"/><rect x="415" y="698" width="1" height="38" fill="#a0a0a0"/><rect x="1117" y="699" width="1" height="37" fill="#fff"/><rect x="416" y="735" width="702" height="1" fill="#fff"/>
<rect x="422" y="715" width="683" height="1" fill="#a0a0a0"/><rect x="422" y="716" width="683" height="1" fill="#fff"/>
<rect x="14" y="735" width="1105" height="1" fill="#fff" opacity=".0"/>
<rect x="1115" y="722" width="3" height="3" fill="#aaa"/>
<rect x="1111" y="726" width="3" height="3" fill="#aaa"/>
<rect x="1115" y="726" width="3" height="3" fill="#aaa"/>
<rect x="1107" y="730" width="3" height="3" fill="#aaa"/>
<rect x="1111" y="730" width="3" height="3" fill="#aaa"/>
<rect x="1115" y="730" width="3" height="3" fill="#aaa"/>
</svg>
<svg class="abs" style="left:137px;top:129px;background:#000" width="537" height="525" viewBox="137 129 537 525" font-family="Liberation Sans,sans-serif">
<defs><clipPath id="bluebands"><rect x="137" y="547.400" width="100" height="5.600"/><rect x="137" y="557.300" width="100" height="4.600"/></clipPath></defs>
<g fill="none" stroke="#10b810" stroke-linejoin="round" stroke-linecap="round"><polyline points="224.1,127 224.1,185.6 191.4,218.3 191.4,250.8 161.5,281.3 135,281.3" stroke-width="6"/><polyline points="232.9,127 232.9,190 200.4,222.5 200.4,257.4 167.5,290.6 135,290.6" stroke-width="3.5"/><polyline points="240.5,127 240.5,195 208,227.5 208,260.8 171,298.3 135,298.3" stroke-width="3.5"/><polyline points="248.2,127 248.2,199.4 215.5,232.1 215.5,264 174,305.8 135,305.8" stroke-width="3.5"/><polyline points="255.5,127 255.5,204.9 223,237.4 223,267.4 202,288.5 202,324.4 216.3,339 224.3,339 227.6,342.6 227.6,375.5 216.8,386.5 135,386.5" stroke-width="3.5"/><polyline points="263,127 263,208.9 230.5,241.4 230.5,270.7 209.3,292 209.3,321.5 217.8,330.2 236,330.2 242,336 242,385.5 228.1,401.4 135,401.4" stroke-width="3.5"/><polyline points="270.5,127 270.5,213.5 237.1,246.9 237.1,274 216.6,294.5 216.6,315.6 223.5,323.2 232,323.2 232,385 222.8,394 135,394" stroke-width="3.5"/><polyline points="277.8,127 277.8,216.8 244.2,250.4 244.2,293.2 249.7,298.6 249.7,390.2 231.3,408.8 175.5,408.8 167.8,424" stroke-width="3.5"/><polyline points="285.3,127 285.3,220.8 250.9,255.2 250.9,283 257.1,291 257.1,409.9 266.3,420.5 266.5,428.2" stroke-width="3.5"/><polyline points="292.6,127 292.6,224.8 283.4,234 283.4,281 294.5,292 313.8,292 320.2,298.3 320.2,319.5 313.8,325.3 268.8,325.3 264.5,329.5 264.5,377.5 268.8,381.8 295.7,381.8 328.4,414.6 328.4,437.4 319,446.9 310,446.9" stroke-width="4"/><polyline points="139.3,191.5 139.3,257.4 135,261.5" stroke-width="3.2"/><polyline points="161.8,191 161.8,264.7 153.5,273.4 135,273.4" stroke-width="3.5"/><polyline points="325.5,127 348,149.4 665.7,149.4 676,139" stroke-width="3.5"/><polyline points="349,127 364,141.9 661.4,141.9 676,127.5" stroke-width="3.5"/><polyline points="373.5,127 381,134.3 657,134.3 665,126.5" stroke-width="3.5"/><polyline points="316,180.4 335.3,161.1 434.5,161.1" stroke-width="5"/><polyline points="316,180.4 316,214 348,245.8 366,245.8 383,262.8 489.5,262.8" stroke-width="5"/><polyline points="340,180.4 363.8,180.4" stroke-width="4"/><polyline points="387.6,180.4 387.6,228.7 404,245.8 437.9,245.8" stroke-width="3.5"/><polyline points="530.9,180.4 530.9,214 503.8,241 503.8,445" stroke-width="3.5"/><polyline points="553.3,180.4 553.3,221.8 567,236 612,236 618.3,243" stroke-width="3.5"/><polyline points="579.5,180.4 579.5,217 591.4,228.7 676,228.7" stroke-width="3.5"/><polyline points="602.4,180.4 602.4,214 609.5,221 676,221" stroke-width="3.5"/><polyline points="626.6,180.4 626.6,204.2 635.8,213.3 676,213.3" stroke-width="3.5"/><polyline points="618.3,267.2 636,290.5 654.8,290.5" stroke-width="4"/><polyline points="583,290.5 583,289.5 553.6,289.5 540.3,302.5 540.3,329.5" stroke-width="6"/><polyline points="583,290.5 602,309.5 676,309.5" stroke-width="6.5"/><polyline points="602.8,309.5 602.8,388 624.5,412.2" stroke-width="6.5"/><polyline points="539.5,328.6 561,328.6 572,340.5" stroke-width="4"/><polyline points="624.5,412.2 641,429.6 676,429.6" stroke-width="6"/><polyline points="624.5,412.2 604,432.7 604,512 597.5,518.4 509,518.4 492.5,501.7 470.2,501.7" stroke-width="6"/><polyline points="601.3,518.4 586.9,532 586.9,624.3 593.5,631 637,631 639.3,626 639.3,609.9" stroke-width="6"/><polyline points="624,483.8 624,520.4 597.2,546.5 597.2,603.5 603.5,609.9 615.3,609.9" stroke-width="5.5"/><polyline points="648.6,483.8 648.6,524.5 614.9,558.5 614.9,586.3" stroke-width="5.5"/><polyline points="672,483.8 672,525.6 639.6,558.5 639.6,586.3" stroke-width="5.5"/><polyline points="676,544 663.7,556.4 663.7,586.3" stroke-width="5.5"/><polyline points="639.3,609.9 663.4,609.9" stroke-width="5"/><polyline points="431.8,500 450.5,518.4 497.1,518.4 509.3,530 560.5,530 574.5,544.5 574.5,632 584.5,641.8 676,641.8" stroke-width="6"/><polyline points="552.3,550.6 564.6,563 564.6,656" stroke-width="4.5"/><polyline points="505.4,478.4 526,501.7 541.9,501.7" stroke-width="4.5"/><polyline points="399.5,362.8 399.5,438.2" stroke-width="5"/><polyline points="446.4,362.8 446.4,438.2" stroke-width="5"/><polyline points="344.8,400 344.8,382.6 364.7,362.8 397,362.8" stroke-width="5"/><polyline points="399.4,438.2 463,501.7 470.2,501.7" stroke-width="6"/><polyline points="399.4,438.2 373,462.6 281.5,462.6 259,439.8 135,439.8" stroke-width="6.5"/><polyline points="144,424 148,439.8" stroke-width="5"/><polyline points="191.6,424 195.6,439.8" stroke-width="5"/><polyline points="239.3,424 243.3,439.8" stroke-width="5"/><polyline points="135,475.3 228,475.3 239.3,495.6" stroke-width="6"/><polyline points="138,475.3 144,495.6" stroke-width="6"/><polyline points="184,475.3 191.6,495.6" stroke-width="6"/><polyline points="273,400 291.4,400 305,414 310,423.3" stroke-width="4.5"/><polyline points="152.2,344.7 171,368 188.4,368" stroke-width="3.5"/><polyline points="267.7,285.2 286,308.2 304,308.2" stroke-width="4"/><polyline points="167.7,495.6 172.5,505 173.8,523.8" stroke-width="3.5"/><polyline points="215,495.6 215,517 208.5,524.5 197,524.5" stroke-width="3.5"/><polyline points="135,510 149.7,523.8" stroke-width="3.5"/><polyline points="135,539.3 245,539.3 253.7,530.7 433.5,530.7 451.5,548 458,554 458,586.2" stroke-width="3.5"/><polyline points="135,545.8 249,545.8 257.5,537.2 417.7,537.2 434,553.5 434,586.2" stroke-width="3.5"/><polyline points="135,553.8 252.4,553.8 262,543.6 395.4,543.6 410.9,558.5 410.9,586.2" stroke-width="3.5"/><polyline points="372,550 386.7,564.7 386.7,586.5" stroke-width="3.5"/><polyline points="135,582.5 150,566 258.4,566 266.5,557 350,557 362.6,569.5 362.6,586.5" stroke-width="3.5"/><polyline points="149.7,595.5 171,573 260.3,573 269,564.3 331.4,564.3 339.2,572.2 339.2,586.5" stroke-width="3.5"/><polyline points="173.8,595.5 189.5,580 263.7,580 272.3,571.4 309,571.4 315.3,578 315.3,586.5" stroke-width="3.5"/><polyline points="197,595.5 206,586.5 292.5,586.5" stroke-width="3.5"/><polyline points="135,610.1 292.5,610.1" stroke-width="3.5"/><polyline points="135,616.9 265,616.9 273.4,625.2 303,625.2 315.3,610.3" stroke-width="3.5"/><polyline points="135,623.7 258.6,623.7 267.3,632.2 333,632.2 339.2,624 339.2,610" stroke-width="3.5"/><polyline points="135,630.5 254.4,630.5 262.6,638.6 356.5,638.6 363,632.5 363,610" stroke-width="3.5"/><polyline points="135,637.2 250.1,637.2 258.7,645.6 376,645.6 386.7,634.7 386.7,610" stroke-width="3.5"/><polyline points="135,644 245.2,644 253.7,652.7 397,652.7 410.7,638 410.7,610" stroke-width="3.5"/><polyline points="135,650.8 242.4,650.8 250,658" stroke-width="3.5"/><polyline points="434.5,610.6 434.5,639 417,656" stroke-width="3.5"/></g>
<path d="M173.5 318.4H185.5M179.5 312.4V324.4" stroke="#10b810" stroke-width="2.2" fill="none"/><path d="M291 254.6H303M297 248.6V260.6" stroke="#10b810" stroke-width="2.2" fill="none"/><path d="M636.4 240.4H648.4M642.4 234.4V246.4" stroke="#10b810" stroke-width="2.2" fill="none"/><path d="M511.4 437.6H523.4M517.4 431.6V443.6" stroke="#10b810" stroke-width="2.2" fill="none"/><path d="M280.2 445.2H292.2M286.2 439.2V451.2" stroke="#10b810" stroke-width="2.2" fill="none"/>
<g fill="none" stroke="#c41616" stroke-linejoin="miter"><rect x="136.7" y="138.2" width="10.9" height="35.7" stroke-width="1.2"/><polyline points="138.8,127 138.8,138.2" stroke-width="1.2"/><polyline points="138.8,173.9 138.8,183" stroke-width="1.2"/><rect x="152.2" y="137" width="18.5" height="36.5" stroke-width="1.2"/><polyline points="161.4,127 161.4,137" stroke-width="1.2"/><polyline points="161.4,173.5 161.4,182" stroke-width="1.2"/><text transform="translate(155.2 139.5) rotate(90)" font-size="19" font-weight="normal" fill="#ee1414" stroke="#ee1414" stroke-width="0.25" text-anchor="start" textLength="30" lengthAdjust="spacingAndGlyphs" opacity="1">10K</text><text transform="translate(134.4 140.5) rotate(90)" font-size="19" font-weight="normal" fill="#ee1414" stroke="#ee1414" stroke-width="0.25" text-anchor="start" textLength="30" lengthAdjust="spacingAndGlyphs" opacity="1">10K</text><polyline points="304.3,127 304.3,168.9 639,168.9 639,127" stroke-width="1.2"/><rect x="626.4" y="133" width="12.6" height="23.7" stroke-width="1.2"/><text x="450.3" y="153.7" font-size="25" font-weight="normal" fill="#ee1414" stroke="#ee1414" stroke-width="0.7" text-anchor="start" textLength="122" lengthAdjust="spacingAndGlyphs" opacity="1">MCP23S17</text><text transform="translate(309.5 197) rotate(90)" font-size="20" font-weight="normal" fill="#ee1414" stroke="#ee1414" stroke-width="0.35" text-anchor="start" textLength="22" lengthAdjust="spacingAndGlyphs" opacity="1">A0</text><text transform="translate(333.5 197) rotate(90)" font-size="20" font-weight="normal" fill="#ee1414" stroke="#ee1414" stroke-width="0.35" text-anchor="start" textLength="22" lengthAdjust="spacingAndGlyphs" opacity="1">A1</text><text transform="translate(357 197) rotate(90)" font-size="20" font-weight="normal" fill="#ee1414" stroke="#ee1414" stroke-width="0.35" text-anchor="start" textLength="22" lengthAdjust="spacingAndGlyphs" opacity="1">A2</text><text transform="translate(381.5 197) rotate(90)" font-size="20" font-weight="normal" fill="#ee1414" stroke="#ee1414" stroke-width="0.35" text-anchor="start" textLength="35.5" lengthAdjust="spacingAndGlyphs" opacity="1">RST</text><text transform="translate(405.5 195) rotate(90)" font-size="20" font-weight="normal" fill="#ee1414" stroke="#ee1414" stroke-width="0.35" text-anchor="start" textLength="36" lengthAdjust="spacingAndGlyphs" opacity="1">INTB</text><text transform="translate(429.7 194.2) rotate(90)" font-size="20" font-weight="normal" fill="#ee1414" stroke="#ee1414" stroke-width="0.35" text-anchor="start" textLength="36" lengthAdjust="spacingAndGlyphs" opacity="1">INTA</text><text transform="translate(454.7 194.2) rotate(90)" font-size="20" font-weight="normal" fill="#ee1414" stroke="#ee1414" stroke-width="0.35" text-anchor="start" textLength="22" lengthAdjust="spacingAndGlyphs" opacity="1">A0</text><text transform="translate(481 194.2) rotate(90)" font-size="20" font-weight="normal" fill="#ee1414" stroke="#ee1414" stroke-width="0.35" text-anchor="start" textLength="22" lengthAdjust="spacingAndGlyphs" opacity="1">A1</text><text transform="translate(503.3 194.2) rotate(90)" font-size="20" font-weight="normal" fill="#ee1414" stroke="#ee1414" stroke-width="0.35" text-anchor="start" textLength="22" lengthAdjust="spacingAndGlyphs" opacity="1">A2</text><text transform="translate(529.7 194.2) rotate(90)" font-size="20" font-weight="normal" fill="#ee1414" stroke="#ee1414" stroke-width="0.35" text-anchor="start" textLength="22" lengthAdjust="spacingAndGlyphs" opacity="1">A3</text><text transform="translate(551 196) rotate(90)" font-size="20" font-weight="normal" fill="#ee1414" stroke="#ee1414" stroke-width="0.35" text-anchor="start" textLength="22" lengthAdjust="spacingAndGlyphs" opacity="1">A4</text><text transform="translate(575 196) rotate(90)" font-size="20" font-weight="normal" fill="#ee1414" stroke="#ee1414" stroke-width="0.35" text-anchor="start" textLength="22" lengthAdjust="spacingAndGlyphs" opacity="1">A5</text><text transform="translate(599 196) rotate(90)" font-size="20" font-weight="normal" fill="#ee1414" stroke="#ee1414" stroke-width="0.35" text-anchor="start" textLength="22" lengthAdjust="spacingAndGlyphs" opacity="1">A6</text><text transform="translate(622.5 196) rotate(90)" font-size="20" font-weight="normal" fill="#ee1414" stroke="#ee1414" stroke-width="0.35" text-anchor="start" textLength="22" lengthAdjust="spacingAndGlyphs" opacity="1">A7</text><rect x="384" y="237.3" width="36.2" height="16.4" stroke-width="1.2"/><polyline points="375.5,245.6 384,245.6" stroke-width="1.2"/><polyline points="420.2,245.6 428.5,245.6" stroke-width="1.2"/><text x="387" y="252" font-size="18.5" font-weight="normal" fill="#ee1414" stroke="#ee1414" stroke-width="0.25" text-anchor="start" textLength="30" lengthAdjust="spacingAndGlyphs" opacity="1">10K</text><rect x="250.5" y="299.3" width="36.2" height="18" stroke-width="1.2"/><polyline points="242,308.2 250.5,308.2" stroke-width="1.2"/><polyline points="286.7,308.2 294.5,308.2" stroke-width="1.2"/><text x="258.3" y="314.9" font-size="18" font-weight="normal" fill="#ee1414" stroke="#ee1414" stroke-width="0.25" text-anchor="start" textLength="17.5" lengthAdjust="spacingAndGlyphs" opacity="1">1K</text><rect x="135" y="359" width="35.7" height="18" stroke-width="1.2"/><polyline points="170.7,368 179,368" stroke-width="1.2"/><text x="142.8" y="374.8" font-size="18" font-weight="normal" fill="#ee1414" stroke="#ee1414" stroke-width="0.25" text-anchor="start" textLength="17.5" lengthAdjust="spacingAndGlyphs" opacity="1">1K</text><rect x="600.5" y="281.2" width="36.7" height="18.4" stroke-width="1.2"/><polyline points="592.5,290.5 600.5,290.5" stroke-width="1.2"/><polyline points="637.2,290.5 645.3,290.5" stroke-width="1.2"/><text x="608" y="296.8" font-size="18" font-weight="normal" fill="#ee1414" stroke="#ee1414" stroke-width="0.25" text-anchor="start" textLength="17.5" lengthAdjust="spacingAndGlyphs" opacity="1">1K</text><rect x="488.1" y="492.4" width="36.7" height="18.3" stroke-width="1.2"/><polyline points="479.5,501.7 488.1,501.7" stroke-width="1.2"/><polyline points="524.8,501.7 532.6,501.7" stroke-width="1.2"/><text x="497.5" y="508.3" font-size="18" font-weight="normal" fill="#ee1414" stroke="#ee1414" stroke-width="0.25" text-anchor="start" textLength="17.5" lengthAdjust="spacingAndGlyphs" opacity="1">1K</text><rect x="290.5" y="390.9" width="36.2" height="18.4" stroke-width="1.2"/><polyline points="282.3,400 290.5,400" stroke-width="1.2"/><polyline points="326.7,400 335.5,400" stroke-width="1.2"/><rect x="387" y="350.7" width="68" height="24.1" stroke-width="1.2"/><polyline points="406.3,362.8 419.3,362.8" stroke-width="1.2"/><polyline points="422.8,362.8 435.9,362.8" stroke-width="1.2"/><polyline points="419.3,355.9 419.3,370.2" stroke-width="1.2"/><polyline points="422.8,355.9 422.8,370.2" stroke-width="1.2"/><text x="397.8" y="346.4" font-size="15.5" font-weight="normal" fill="#ee1414" stroke="#ee1414" stroke-width="0.25" text-anchor="start" textLength="48.5" lengthAdjust="spacingAndGlyphs" opacity="1">100nF</text><rect x="530.5" y="347.2" width="18.1" height="36.1" stroke-width="1.2"/><polyline points="539.5,339.8 539.5,347.2" stroke-width="1.2"/><polyline points="539.5,383.3 539.5,391.4" stroke-width="1.2"/><text transform="translate(545.5 381) rotate(-90)" font-size="16" font-weight="normal" fill="#ee1414" stroke="#ee1414" stroke-width="0.25" text-anchor="start" textLength="32" lengthAdjust="spacingAndGlyphs" opacity="1">100K</text><rect x="560.2" y="330.2" width="24.1" height="68.1" stroke-width="1.2"/><polyline points="572,349.8 572,363.3" stroke-width="1.2"/><polyline points="572,366.4 572,379" stroke-width="1.2"/><polyline points="564.3,363.3 579.8,363.3" stroke-width="1.2"/><polyline points="564.3,366.4 579.8,366.4" stroke-width="1.2"/><text transform="translate(589.5 342.2) rotate(90)" font-size="17" font-weight="normal" fill="#ee1414" stroke="#ee1414" stroke-width="0.25" text-anchor="start" textLength="47.5" lengthAdjust="spacingAndGlyphs" opacity="1">100nF</text><circle cx="423" cy="438.200" r="47.300" stroke-width="1.100"/><text x="393" y="418.7" font-size="20" font-weight="normal" fill="#ee1414" stroke="#ee1414" stroke-width="0.6" text-anchor="start" textLength="58.5" lengthAdjust="spacingAndGlyphs" opacity="1">470nF</text><rect x="420.9" y="426.3" width="6.5" height="24.3" stroke-width="1"/><polyline points="417.9,426.3 417.9,450.6" stroke-width="1"/><polyline points="411,438.2 417.9,438.2" stroke-width="1"/><polyline points="427.4,438.2 435,438.2" stroke-width="1"/><polyline points="443.7,460.9 449.7,460.9" stroke-width="1"/><polyline points="446.7,457.9 446.7,463.9" stroke-width="1"/><polyline points="470.2,438.2 472.5,438.2" stroke-width="1"/><rect x="135" y="435.3" width="116.9" height="48.3" stroke-width="1.2"/><rect x="612.4" y="424" width="77.6" height="47.2" stroke-width="1.3"/><rect x="140" y="542.5" width="18.7" height="34.9" stroke-width="1.2"/><polyline points="149.7,531.9 149.7,542.5" stroke-width="1.2"/><polyline points="149.7,577.4 149.7,587.4" stroke-width="1.2"/><text transform="translate(143 544) rotate(90)" font-size="18" font-weight="normal" fill="#ee1414" stroke="#ee1414" stroke-width="0.25" text-anchor="start" textLength="30" lengthAdjust="spacingAndGlyphs" opacity="1">10K</text><rect x="165" y="542.5" width="18.7" height="34.9" stroke-width="1.2"/><polyline points="173.8,531.9 173.8,542.5" stroke-width="1.2"/><polyline points="173.8,577.4 173.8,587.4" stroke-width="1.2"/><text transform="translate(168 544) rotate(90)" font-size="18" font-weight="normal" fill="#ee1414" stroke="#ee1414" stroke-width="0.25" text-anchor="start" textLength="30" lengthAdjust="spacingAndGlyphs" opacity="1">10K</text><rect x="188.4" y="542.5" width="18.7" height="34.9" stroke-width="1.2"/><polyline points="197,531.9 197,542.5" stroke-width="1.2"/><polyline points="197,577.4 197,587.4" stroke-width="1.2"/><text transform="translate(191.4 544) rotate(90)" font-size="18" font-weight="normal" fill="#ee1414" stroke="#ee1414" stroke-width="0.25" text-anchor="start" textLength="30" lengthAdjust="spacingAndGlyphs" opacity="1">10K</text><text x="327.6" y="529.1" font-size="31.5" font-weight="normal" fill="#f01010" stroke="#f01010" stroke-width="1.5" text-anchor="start" textLength="56.5" lengthAdjust="spacingAndGlyphs" opacity="1">CON</text><text x="396.4" y="529.1" font-size="31.5" font-weight="normal" fill="#f01010" stroke="#f01010" stroke-width="1.5" text-anchor="start" textLength="18.3" lengthAdjust="spacingAndGlyphs" opacity="1">A</text><rect x="294.400" y="568.800" width="208.700" height="62" rx="4" stroke-width="4.500" stroke="#f01010"/><polyline points="364.800,568.800 364.800,574.400 429.800,574.400 429.800,568.800" stroke-width="4" stroke="#f01010"/><polyline points="690,568.800 595.100,568.800 595.100,630.600 690,630.600" stroke-width="4.500" stroke="#f01010"/><polyline points="666,568.800 666,574.200 690,574.200" stroke-width="4" stroke="#f01010"/><text transform="translate(654.8 658.5) rotate(-90)" font-size="11.5" font-weight="bold" fill="#f01010" stroke="#f01010" stroke-width="0.3" text-anchor="start" textLength="19" lengthAdjust="spacingAndGlyphs" opacity="1">SS</text></g>
<path d="M147 301.9H155M151 297.9V305.9" stroke="#ee1414" stroke-width="2" fill="none"/><path d="M272.5 246.7H280.5M276.5 242.7V250.7" stroke="#ee1414" stroke-width="2" fill="none"/><path d="M596.2 237.3H604.2M600.2 233.3V241.3" stroke="#ee1414" stroke-width="2" fill="none"/><path d="M500.5 437.6H508.5M504.5 433.6V441.6" stroke="#ee1414" stroke-width="2" fill="none"/>
<g fill="none" stroke="#2a6cf0" stroke-linejoin="round" stroke-linecap="round"><polyline points="459.5,180.4 459.5,206.3 453.5,212.2 265.5,212.2 188.4,289.5 135,289.5" stroke-width="3.9"/><polyline points="483.4,180.4 483.4,209.4 473,219.7 270.8,219.7 171,319.5" stroke-width="3.9"/><polyline points="507.2,180.4 507.2,213.2 493.3,227.2 279.4,227.2 267.7,238.5 267.7,261.3" stroke-width="4"/><polyline points="412,127 412,137.3 396,153.7 382,153.7 363.8,172 363.8,180.4" stroke-width="4.5"/><polyline points="436,127 436,161" stroke-width="4.5"/><polyline points="676,176 642.8,209.6 543.5,209.6 489.5,262.8" stroke-width="5"/><polyline points="232.6,308 233.2,320 233.2,405.6 240.5,413 239.3,424" stroke-width="5.3"/><polyline points="215.5,424 226,443.4 250,443.4 266.5,428.2" stroke-width="3.5"/><polyline points="446.7,438.2 432.3,455 432.3,500" stroke-width="6"/><polyline points="539.7,401.2 558.8,401.2 572,388.3 592.4,388.3 604,400 604,464.8 624.5,483.8" stroke-width="6"/><polyline points="676,327.6 664,327.6 648.4,342.5 648.4,412.2" stroke-width="3.7"/><polyline points="685,329 672.4,341.4 672.4,412.2" stroke-width="3.7"/><polyline points="135,550.2 552.3,550.2" stroke-width="5.5"/><polyline points="135,559.6 536.4,559.6 568.3,590.5 568.3,636 588,656" stroke-width="4.6"/></g>
<g clip-path="url(#bluebands)"><rect x="140" y="542.500" width="18.700" height="34.900" fill="none" stroke="#8a1c50" stroke-width="1.200"/><text transform="translate(143 544) rotate(90)" font-size="18" fill="#c01444" stroke="#c01444" stroke-width="0.500" textLength="30" lengthAdjust="spacingAndGlyphs" opacity=".8">10K</text><rect x="165" y="542.500" width="18.700" height="34.900" fill="none" stroke="#8a1c50" stroke-width="1.200"/><text transform="translate(168 544) rotate(90)" font-size="18" fill="#c01444" stroke="#c01444" stroke-width="0.500" textLength="30" lengthAdjust="spacingAndGlyphs" opacity=".8">10K</text><rect x="188.4" y="542.500" width="18.700" height="34.900" fill="none" stroke="#8a1c50" stroke-width="1.200"/><text transform="translate(191.4 544) rotate(90)" font-size="18" fill="#c01444" stroke="#c01444" stroke-width="0.500" textLength="30" lengthAdjust="spacingAndGlyphs" opacity=".8">10K</text></g>
<g fill="#000" stroke="#55d8fa"><circle cx="139.3" cy="191.5" r="5.9" stroke-width="4.9"/><circle cx="161.4" cy="191.2" r="5.9" stroke-width="4.9"/><circle cx="316" cy="180.4" r="6.5" stroke-width="6"/><circle cx="339.9" cy="180.4" r="6.5" stroke-width="6"/><circle cx="363.8" cy="180.4" r="6.5" stroke-width="6"/><circle cx="387.6" cy="180.4" r="6.5" stroke-width="6"/><circle cx="411.5" cy="180.4" r="6.5" stroke-width="6"/><circle cx="435.4" cy="180.4" r="6.5" stroke-width="6"/><circle cx="459.3" cy="180.4" r="6.5" stroke-width="6"/><circle cx="483.2" cy="180.4" r="6.5" stroke-width="6"/><circle cx="507" cy="180.4" r="6.5" stroke-width="6"/><circle cx="530.9" cy="180.4" r="6.5" stroke-width="6"/><circle cx="554.8" cy="180.4" r="6.5" stroke-width="6"/><circle cx="578.7" cy="180.4" r="6.5" stroke-width="6"/><circle cx="602.6" cy="180.4" r="6.5" stroke-width="6"/><circle cx="626.4" cy="180.4" r="6.5" stroke-width="6"/><circle cx="297" cy="129" r="4.5" stroke-width="3"/><circle cx="434.5" cy="161.1" r="4.7" stroke-width="3.4"/><circle cx="489.5" cy="262.8" r="4.7" stroke-width="3.4"/><circle cx="266.5" cy="428.2" r="4.8" stroke-width="3.2"/><circle cx="431.8" cy="500" r="4.9" stroke-width="3"/><circle cx="552.3" cy="550.6" r="5" stroke-width="3.1"/><circle cx="366" cy="245.6" r="6.5" stroke-width="6"/><circle cx="437.9" cy="245.6" r="6.5" stroke-width="6"/><circle cx="232.4" cy="308.2" r="6.5" stroke-width="6"/><circle cx="304" cy="308.2" r="6.5" stroke-width="6"/><circle cx="188.4" cy="368" r="6.4" stroke-width="5.9"/><circle cx="583" cy="290.5" r="6.5" stroke-width="6"/><circle cx="654.8" cy="290.5" r="6.5" stroke-width="6"/><circle cx="539.5" cy="329.5" r="6.9" stroke-width="6.8"/><circle cx="539.7" cy="401.2" r="6.7" stroke-width="6.3"/><circle cx="572" cy="340.5" r="6.4" stroke-width="5.9"/><circle cx="572" cy="388.3" r="6.4" stroke-width="5.9"/><circle cx="397" cy="362.8" r="6.4" stroke-width="5.9"/><circle cx="445.2" cy="362.8" r="6.4" stroke-width="5.9"/><circle cx="399.4" cy="438.2" r="7.8" stroke-width="7.9"/><circle cx="446.7" cy="438.2" r="7.8" stroke-width="7.9"/><circle cx="273" cy="400" r="6.4" stroke-width="5.9"/><circle cx="344.8" cy="400" r="6.4" stroke-width="5.9"/><circle cx="470.2" cy="501.7" r="6.4" stroke-width="5.9"/><circle cx="541.9" cy="501.7" r="6.4" stroke-width="5.9"/><circle cx="144" cy="424" r="6.2" stroke-width="5.5"/><circle cx="144" cy="495.8" r="6.2" stroke-width="5.5"/><circle cx="167.8" cy="424" r="6.2" stroke-width="5.5"/><circle cx="167.8" cy="495.8" r="6.2" stroke-width="5.5"/><circle cx="191.6" cy="424" r="6.2" stroke-width="5.5"/><circle cx="191.6" cy="495.8" r="6.2" stroke-width="5.5"/><circle cx="215.4" cy="424" r="6.2" stroke-width="5.5"/><circle cx="215.4" cy="495.8" r="6.2" stroke-width="5.5"/><circle cx="239.3" cy="424" r="6.2" stroke-width="5.5"/><circle cx="239.3" cy="495.8" r="6.2" stroke-width="5.5"/><circle cx="149.7" cy="523.8" r="5.6" stroke-width="5"/><circle cx="149.7" cy="595.5" r="5.6" stroke-width="5"/><circle cx="173.8" cy="523.8" r="5.6" stroke-width="5"/><circle cx="173.8" cy="595.5" r="5.6" stroke-width="5"/><circle cx="197" cy="523.8" r="5.6" stroke-width="5"/><circle cx="197" cy="595.5" r="5.6" stroke-width="5"/><circle cx="624.5" cy="412.2" r="6.2" stroke-width="5.5"/><circle cx="624.5" cy="483.8" r="6.2" stroke-width="5.5"/><circle cx="648.1" cy="412.2" r="6.2" stroke-width="5.5"/><circle cx="648.1" cy="483.8" r="6.2" stroke-width="5.5"/><circle cx="671.7" cy="412.2" r="6.2" stroke-width="5.5"/><circle cx="671.7" cy="483.8" r="6.2" stroke-width="5.5"/><circle cx="315.3" cy="586.4" r="6.8" stroke-width="5.1"/><circle cx="315.3" cy="610.2" r="6.8" stroke-width="5.1"/><circle cx="339.2" cy="586.4" r="6.8" stroke-width="5.1"/><circle cx="339.2" cy="610.2" r="6.8" stroke-width="5.1"/><circle cx="363" cy="586.4" r="6.8" stroke-width="5.1"/><circle cx="363" cy="610.2" r="6.8" stroke-width="5.1"/><circle cx="386.9" cy="586.4" r="6.8" stroke-width="5.1"/><circle cx="386.9" cy="610.2" r="6.8" stroke-width="5.1"/><circle cx="410.7" cy="586.4" r="6.8" stroke-width="5.1"/><circle cx="410.7" cy="610.2" r="6.8" stroke-width="5.1"/><circle cx="434.6" cy="586.4" r="6.8" stroke-width="5.1"/><circle cx="434.6" cy="610.2" r="6.8" stroke-width="5.1"/><circle cx="458.4" cy="586.4" r="6.8" stroke-width="5.1"/><circle cx="458.4" cy="610.2" r="6.8" stroke-width="5.1"/><circle cx="482.2" cy="610.2" r="6.8" stroke-width="5.1"/><circle cx="615.3" cy="586.3" r="6.8" stroke-width="5.1"/><circle cx="615.3" cy="609.9" r="6.8" stroke-width="5.1"/><circle cx="639.3" cy="586.3" r="6.8" stroke-width="5.1"/><circle cx="639.3" cy="609.9" r="6.8" stroke-width="5.1"/><circle cx="663.4" cy="586.3" r="6.8" stroke-width="5.1"/><circle cx="663.4" cy="609.9" r="6.8" stroke-width="5.1"/></g>
<rect x="473" y="577" width="18.600" height="18.600" fill="#55d8fa"/><circle cx="482.300" cy="586.300" r="4.200" fill="#000"/>
<circle cx="152.2" cy="321" r="5.750" fill="#000" stroke="#55d8fa" stroke-width="4.900"/><circle cx="152.2" cy="344.7" r="5.750" fill="#000" stroke="#55d8fa" stroke-width="4.900"/><circle cx="152.2" cy="334.7" r="4.500" fill="#f5d820"/><circle cx="152.2" cy="333.1" r="1.300" fill="#d02810"/><circle cx="152.3" cy="335.2" r="20.100" fill="none" stroke="#f5d820" stroke-width="5.200"/><path d="M135.5 350.5A22.7 22.7 0 0 0 169.1 350.5z" fill="#f5d820"/><path d="M139 350.5A20.3 20.3 0 1 1 165.6 350.5z" fill="none" stroke="#cc3410" stroke-width="1.700"/><circle cx="267.7" cy="261.4" r="5.750" fill="#000" stroke="#55d8fa" stroke-width="4.900"/><circle cx="267.7" cy="285.2" r="5.750" fill="#000" stroke="#55d8fa" stroke-width="4.900"/><circle cx="267.7" cy="275.8" r="4.500" fill="#f5d820"/><circle cx="267.7" cy="274.2" r="1.300" fill="#d02810"/><circle cx="268.1" cy="276.2" r="20.100" fill="none" stroke="#f5d820" stroke-width="5.200"/><path d="M251.3 291.5A22.7 22.7 0 0 0 284.9 291.5z" fill="#f5d820"/><path d="M254.8 291.5A20.3 20.3 0 1 1 281.4 291.5z" fill="none" stroke="#cc3410" stroke-width="1.700"/><circle cx="618.3" cy="243.1" r="5.750" fill="#000" stroke="#55d8fa" stroke-width="4.900"/><circle cx="618.3" cy="267.2" r="5.750" fill="#000" stroke="#55d8fa" stroke-width="4.900"/><circle cx="618.3" cy="257.8" r="4.500" fill="#f5d820"/><circle cx="618.3" cy="256.2" r="1.300" fill="#d02810"/><circle cx="618.7" cy="257.8" r="20.100" fill="none" stroke="#f5d820" stroke-width="5.200"/><path d="M601.9 273.1A22.7 22.7 0 0 0 635.5 273.1z" fill="#f5d820"/><path d="M605.4 273.1A20.3 20.3 0 1 1 632 273.1z" fill="none" stroke="#cc3410" stroke-width="1.700"/><circle cx="505.4" cy="455" r="5.750" fill="#000" stroke="#55d8fa" stroke-width="4.900"/><circle cx="505.4" cy="478.4" r="5.750" fill="#000" stroke="#55d8fa" stroke-width="4.900"/><circle cx="505.4" cy="467.5" r="4.500" fill="#f5d820"/><circle cx="505.4" cy="465.9" r="1.300" fill="#d02810"/><circle cx="505.5" cy="467.6" r="20.100" fill="none" stroke="#f5d820" stroke-width="5.200"/><path d="M488.7 482.9A22.7 22.7 0 0 0 522.3 482.9z" fill="#f5d820"/><path d="M492.2 482.9A20.3 20.3 0 1 1 518.8 482.9z" fill="none" stroke="#cc3410" stroke-width="1.700"/><circle cx="309.8" cy="446.9" r="5.750" fill="#000" stroke="#55d8fa" stroke-width="4.900"/><circle cx="309.8" cy="423.3" r="5.750" fill="#000" stroke="#55d8fa" stroke-width="4.900"/><circle cx="309.8" cy="434.3" r="4.500" fill="#f5d820"/><circle cx="309.8" cy="432.7" r="1.300" fill="#d02810"/><circle cx="310.6" cy="434" r="20.100" fill="none" stroke="#f5d820" stroke-width="5.200"/><path d="M295.8 416.8A22.7 22.7 0 0 1 325.4 416.8z" fill="#f5d820"/><path d="M299.8 416.8A20.3 20.3 0 1 0 321.4 416.8z" fill="none" stroke="#cc3410" stroke-width="1.700"/>
<circle cx="528" cy="655.300" r="21.300" fill="none" stroke="#55d8fa" stroke-width="2"/>
<path d="M272 127L304.800 308" stroke="#f2f2f2" stroke-width="1.500"/>
<defs><pattern id="hat" width="4" height="4" patternUnits="userSpaceOnUse" patternTransform="rotate(-45)"><rect width="4" height="4" fill="#000"/><rect width="4" height="1.300" fill="#fff"/></pattern></defs>
<polyline points="459,610.600 459,639.300 443,655.300" fill="none" stroke="#fff" stroke-width="5.600" stroke-linecap="round" stroke-linejoin="round"/>
<polyline points="459,610.600 459,639.300 443,655.300" fill="none" stroke="url(#hat)" stroke-width="3.600" stroke-linecap="round" stroke-linejoin="round"/>
</svg>
<svg class="abs" style="left:698px;top:106px" width="214" height="592" viewBox="698 106 214 592" font-family="Liberation Sans,sans-serif" font-size="11">
<rect x="698" y="106" width="214" height="592" fill="#f0f0f0"/>
<rect x="698" y="106" width="1" height="592" fill="#fff"/>
<rect x="699" y="107" width="205" height="589" fill="#ebd3c0"/>
<rect x="699" y="107" width="204" height="18.500" fill="#000"/>
<rect x="903" y="125.500" width="1" height="570" fill="#a8a29a"/>
<rect x="699" y="695" width="205" height="1" fill="#fff"/><rect x="699" y="696" width="205" height="1" fill="#8c8c8c"/>
<text x="793.400" y="120.700" text-anchor="middle" font-family="Liberation Serif,serif" font-weight="bold" font-size="12.800" fill="#f2dcc8">DRC</text>
<rect x="886" y="108" width="16" height="16" fill="#fff"/><rect x="901" y="108" width="1" height="16" fill="#888"/><rect x="886" y="123" width="16" height="1" fill="#888"/><path d="M890 112l7.500 7.500M897.5 112l-7.500 7.500" stroke="#000" stroke-width="1.500"/>
<defs><pattern id="spl" x="904" y="107" width="8" height="4" patternUnits="userSpaceOnUse"><rect width="8" height="4" fill="#f8f8f8"/><rect x="3" y="3" width="1" height="1" fill="#8a8a8a"/><rect x="6" y="1" width="1" height="1" fill="#8a8a8a"/></pattern></defs>
<rect x="904" y="107" width="8" height="590" fill="url(#spl)"/>
<path d="M703.5 146.5H898.5V204.5H703.5z" fill="none" stroke="#fff" stroke-width="1" transform="translate(1 1)"/><path d="M703.5 146.5H898.5V204.5H703.5z" fill="none" stroke="#a8a39d" stroke-width="1"/><rect x="709" y="144" width="87.5" height="5" fill="#ebd3c0"/><text x="711" y="149.5" fill="#1a1a1a" textLength="83.5" lengthAdjust="spacing">Minimum distance</text>
<path d="M703.5 220.5H898.5V338.5H703.5z" fill="none" stroke="#fff" stroke-width="1" transform="translate(1 1)"/><path d="M703.5 220.5H898.5V338.5H703.5z" fill="none" stroke="#a8a39d" stroke-width="1"/><rect x="709" y="218" width="43" height="5" fill="#ebd3c0"/><text x="711" y="223.5" fill="#1a1a1a" textLength="39" lengthAdjust="spacing">Min/Max</text>
<path d="M703.5 354.5H898.5V450.5H703.5z" fill="none" stroke="#fff" stroke-width="1" transform="translate(1 1)"/><path d="M703.5 354.5H898.5V450.5H703.5z" fill="none" stroke="#a8a39d" stroke-width="1"/><rect x="709" y="352" width="71" height="5" fill="#ebd3c0"/><text x="711" y="357.5" fill="#1a1a1a" textLength="67" lengthAdjust="spacing">Miscellaneous</text>
<rect x="713.5" y="159.5" width="15" height="15" fill="#fff" stroke="#333" stroke-width="1"/><path d="M716.3 167.2l3 3 6.300-6.800" fill="none" stroke="#3a3a3a" stroke-width="1.300"/>
<text x="732" y="170" fill="#1a1a1a" letter-spacing="-0.1">Copper:</text>
<rect x="816" y="159.5" width="41.500" height="16" fill="#fff"/><rect x="817" y="160.5" width="39.500" height="14.300" fill="#000"/><text x="854.500" y="172.5" text-anchor="end" font-size="13" fill="#e6f246">0.15</text><rect x="860" y="161.0" width="5.500" height="13.500" rx="1.500" fill="#777"/><rect x="862" y="162.5" width="1.600" height="10.500" fill="#111"/><text x="871" y="170.8" font-size="10" fill="#1a1a1a" textLength="15.500" lengthAdjust="spacingAndGlyphs">mm</text>
<rect x="713.5" y="179.5" width="15" height="15" fill="#fff" stroke="#333" stroke-width="1"/><path d="M716.3 187.2l3 3 6.300-6.800" fill="none" stroke="#3a3a3a" stroke-width="1.300"/>
<text x="732" y="190" fill="#1a1a1a" letter-spacing="-0.1">Drillings:</text>
<rect x="816" y="179.5" width="41.500" height="16" fill="#fff"/><rect x="817" y="180.5" width="39.500" height="14.300" fill="#000"/><text x="854.500" y="192.5" text-anchor="end" font-size="13" fill="#e6f246">0.50</text><rect x="860" y="181.0" width="5.500" height="13.500" rx="1.500" fill="#777"/><rect x="862" y="182.5" width="1.600" height="10.500" fill="#111"/><text x="871" y="190.8" font-size="10" fill="#1a1a1a" textLength="15.500" lengthAdjust="spacingAndGlyphs">mm</text>
<rect x="713.5" y="233.5" width="15" height="15" fill="#fff" stroke="#333" stroke-width="1"/><path d="M716.3 241.2l3 3 6.300-6.800" fill="none" stroke="#3a3a3a" stroke-width="1.300"/>
<text x="732" y="244" fill="#1a1a1a" letter-spacing="-0.1">Drilling min:</text>
<rect x="816" y="233.5" width="41.500" height="16" fill="#fff"/><rect x="817" y="234.5" width="39.500" height="14.300" fill="#000"/><text x="854.500" y="246.5" text-anchor="end" font-size="13" fill="#e6f246">0.30</text><rect x="860" y="235.0" width="5.500" height="13.500" rx="1.500" fill="#777"/><rect x="862" y="236.5" width="1.600" height="10.500" fill="#111"/><text x="871" y="244.8" font-size="10" fill="#1a1a1a" textLength="15.500" lengthAdjust="spacingAndGlyphs">mm</text>
<rect x="713.5" y="253.5" width="15" height="15" fill="#fff" stroke="#333" stroke-width="1"/><path d="M716.3 261.2l3 3 6.300-6.800" fill="none" stroke="#3a3a3a" stroke-width="1.300"/>
<text x="732" y="264" fill="#1a1a1a" letter-spacing="-0.1">Drilling max:</text>
<rect x="816" y="253.5" width="41.500" height="16" fill="#fff"/><rect x="817" y="254.5" width="39.500" height="14.300" fill="#000"/><text x="854.500" y="266.5" text-anchor="end" font-size="13" fill="#e6f246">8.00</text><rect x="860" y="255.0" width="5.500" height="13.500" rx="1.500" fill="#777"/><rect x="862" y="256.5" width="1.600" height="10.500" fill="#111"/><text x="871" y="264.8" font-size="10" fill="#1a1a1a" textLength="15.500" lengthAdjust="spacingAndGlyphs">mm</text>
<rect x="713.5" y="273.5" width="15" height="15" fill="#fff" stroke="#333" stroke-width="1"/><path d="M716.3 281.2l3 3 6.300-6.800" fill="none" stroke="#3a3a3a" stroke-width="1.300"/>
<text x="732" y="284" fill="#1a1a1a" letter-spacing="-0.1">Track min:</text>
<rect x="816" y="273.5" width="41.500" height="16" fill="#fff"/><rect x="817" y="274.5" width="39.500" height="14.300" fill="#000"/><text x="854.500" y="286.5" text-anchor="end" font-size="13" fill="#e6f246">0.20</text><rect x="860" y="275.0" width="5.500" height="13.500" rx="1.500" fill="#777"/><rect x="862" y="276.5" width="1.600" height="10.500" fill="#111"/><text x="871" y="284.8" font-size="10" fill="#1a1a1a" textLength="15.500" lengthAdjust="spacingAndGlyphs">mm</text>
<rect x="713.5" y="293.5" width="15" height="15" fill="#fff" stroke="#333" stroke-width="1"/><path d="M716.3 301.2l3 3 6.300-6.800" fill="none" stroke="#3a3a3a" stroke-width="1.300"/>
<text x="732" y="304" fill="#1a1a1a" letter-spacing="-0.1">Annular ring min</text>
<rect x="816" y="293.5" width="41.500" height="16" fill="#fff"/><rect x="817" y="294.5" width="39.500" height="14.300" fill="#000"/><text x="854.500" y="306.5" text-anchor="end" font-size="13" fill="#e6f246">0.20</text><rect x="860" y="295.0" width="5.500" height="13.500" rx="1.500" fill="#777"/><rect x="862" y="296.5" width="1.600" height="10.500" fill="#111"/><text x="871" y="304.8" font-size="10" fill="#1a1a1a" textLength="15.500" lengthAdjust="spacingAndGlyphs">mm</text>
<rect x="713.5" y="313.5" width="15" height="15" fill="#fff" stroke="#333" stroke-width="1"/>
<text x="732" y="324" fill="#1a1a1a" letter-spacing="-0.1">Silkscreen min:</text>
<rect x="816" y="313.5" width="41.500" height="16" fill="#fff"/><rect x="817" y="314.5" width="39.500" height="14.300" fill="#000"/><text x="854.500" y="326.5" text-anchor="end" font-size="13" fill="#e6f246">0.15</text><rect x="860" y="315.0" width="5.500" height="13.500" rx="1.500" fill="#777"/><rect x="862" y="316.5" width="1.600" height="10.500" fill="#111"/><text x="871" y="324.8" font-size="10" fill="#1a1a1a" textLength="15.500" lengthAdjust="spacingAndGlyphs">mm</text>
<rect x="713.5" y="367.5" width="15" height="15" fill="#fff" stroke="#333" stroke-width="1"/>
<text x="732" y="378" fill="#1a1a1a" letter-spacing="-0.1">Silkscreen over pads</text>
<rect x="713.5" y="387.5" width="15" height="15" fill="#fff" stroke="#333" stroke-width="1"/><path d="M716.3 395.2l3 3 6.300-6.800" fill="none" stroke="#3a3a3a" stroke-width="1.300"/>
<text x="732" y="398" fill="#1a1a1a" letter-spacing="-0.1">Drilling on SMD pads</text>
<rect x="713.5" y="407.5" width="15" height="15" fill="#fff" stroke="#333" stroke-width="1"/><path d="M716.3 415.2l3 3 6.300-6.800" fill="none" stroke="#3a3a3a" stroke-width="1.300"/>
<text x="732" y="418" fill="#1a1a1a" letter-spacing="-0.1">Pads without soldermask</text>
<rect x="713.5" y="427.5" width="15" height="15" fill="#fff" stroke="#333" stroke-width="1"/><path d="M716.3 435.2l3 3 6.300-6.800" fill="none" stroke="#3a3a3a" stroke-width="1.300"/>
<text x="732" y="438" fill="#1a1a1a" letter-spacing="-0.1">Soldermask out of pads</text>
<rect x="703" y="459" width="196" height="16.600" fill="#000080"/>
<text x="801" y="471.400" text-anchor="middle" fill="#eee6f2" letter-spacing="-0.1">1 Entries</text>
<rect x="704.5" y="486.5" width="91" height="21" fill="#e1e1e1" stroke="#adadad" stroke-width="1"/>
<rect x="806.5" y="486.5" width="91" height="21" fill="#e1e1e1" stroke="#adadad" stroke-width="1"/>
<rect x="704.5" y="519.5" width="193" height="17" fill="#e1e1e1" stroke="#adadad" stroke-width="1"/>
<path d="M719.800 491.500v12l6.800-6z" fill="#e4744a" stroke="#5a2a1a" stroke-width="1"/>
<path d="M823.500 491.500v12l6.800-6z" fill="#f6c0a4" stroke="#9a4a2a" stroke-width="1.200"/>
<text x="734.500" y="501.500" fill="#1a1a1a" letter-spacing="-0.1">Complete...</text>
<text x="838" y="501.500" fill="#1a1a1a" letter-spacing="-0.1">Window...</text>
<text x="801.500" y="531.600" text-anchor="middle" fill="#1a1a1a" letter-spacing="-0.1">Select all</text>
<rect x="703.500" y="539.500" width="195" height="152" fill="#fff" stroke="#828790" stroke-width="1"/>
<rect x="718.300" y="542" width="68" height="14" fill="#2a8ae0"/>
<rect x="718.300" y="542" width="178.700" height="13" fill="#0a78d7"/>
<rect x="707.500" y="544.500" width="8.500" height="8.500" fill="#10b410" stroke="#1a1a1a" stroke-width="1"/>
<text x="721" y="552.500" fill="#fff" letter-spacing="-0.1">Track too thin</text>
</svg>
<svg class="abs" style="left:911px;top:106px" width="208" height="592" viewBox="911 106 208 592" font-family="Liberation Sans,sans-serif" font-size="11">
<rect x="911" y="106" width="208" height="592" fill="#f0f0f0"/>
<rect x="912" y="107" width="206.500" height="18.500" fill="#000"/>
<text x="1008" y="121" text-anchor="middle" font-weight="bold" font-size="12" fill="#f25a5a" letter-spacing="0.1">Macros</text>
<rect x="1101" y="108" width="16" height="16" fill="#fff"/><rect x="1116" y="108" width="1" height="16" fill="#888"/><rect x="1101" y="123" width="16" height="1" fill="#888"/><path d="M1105 112l7.500 7.500M1112.5 112l-7.500 7.500" stroke="#000" stroke-width="1.500"/>
<rect x="912.500" y="127.500" width="205.500" height="215" fill="#fff" stroke="#9a9a9a" stroke-width="1"/>
<rect x="1097" y="128" width="20.500" height="214" fill="#f0f0f0"/>
<rect x="1097.500" y="199.500" width="18.500" height="51" fill="#cdcdcd"/>
<path d="M1101.800 142.800l4.700-4.700 4.700 4.700M1101.800 326.700l4.700 4.700 4.700-4.700" fill="none" stroke="#555" stroke-width="1.700"/>
<g stroke="#555" stroke-width="1" stroke-dasharray="1 1.500" shape-rendering="crispEdges">
<path d="M925.500 128v214M942.500 128v5M942.500 144v198M959.500 146v196"/>
<path d="M960 154.5h8"/>
<path d="M960 170.5h8"/>
<path d="M960 186.5h8"/>
<path d="M960 202.5h8"/>
<path d="M960 218.5h8"/>
<path d="M960 234.5h8"/>
<path d="M960 250.5h8"/>
<path d="M960 266.5h8"/>
<path d="M960 282.5h8"/>
<path d="M960 298.5h8"/>
<path d="M960 314.5h8"/>
<path d="M960 330.5h8"/>
<path d="M948 138.500h3"/>
</g>
<rect x="937.500" y="133.500" width="10" height="10" fill="#fff" stroke="#919191" stroke-width="1"/>
<path d="M939.500 138.500h6" stroke="#2a3a8a" stroke-width="1"/>
<rect x="968.500" y="274" width="54" height="15" fill="#ebebeb"/>
<text x="952.500" y="142" fill="#111" letter-spacing="-0.1">SMD - SOIC</text>
<text x="969.700" y="158" fill="#111" letter-spacing="-0.15">SOIC-8</text>
<text x="969.700" y="174" fill="#111" letter-spacing="-0.15">SOIC-8-W</text>
<text x="969.700" y="190" fill="#111" letter-spacing="-0.15">SOIC-14</text>
<text x="969.700" y="206" fill="#111" letter-spacing="-0.15">SOIC-14-W</text>
<text x="969.700" y="222" fill="#111" letter-spacing="-0.15">SOIC-16</text>
<text x="969.700" y="238" fill="#111" letter-spacing="-0.15">SOIC-16-W</text>
<text x="969.700" y="254" fill="#111" letter-spacing="-0.15">SOIC-20-W</text>
<text x="969.700" y="270" fill="#111" letter-spacing="-0.15">SOIC-24-W</text>
<text x="969.700" y="286" fill="#111" letter-spacing="-0.15">SOIC-24-X</text>
<text x="969.700" y="302" fill="#111" letter-spacing="-0.15">SOIC-28-W</text>
<text x="969.700" y="318" fill="#111" letter-spacing="-0.15">SOIC-28-X</text>
<text x="969.700" y="334" fill="#111" letter-spacing="-0.15">SOIC-32-W</text>
<defs><pattern id="spl2" x="912" y="343" width="4" height="6" patternUnits="userSpaceOnUse"><rect width="4" height="6" fill="#f8f8f8"/><rect x="1" y="1" width="1" height="1" fill="#8a8a8a"/><rect x="3" y="4" width="1" height="1" fill="#8a8a8a"/></pattern></defs>
<rect x="912" y="343" width="206" height="6" fill="url(#spl2)"/>
<rect x="915.500" y="348.500" width="15" height="15" fill="#fff" stroke="#333" stroke-width="1"/>
<path d="M918.300 356.200l3 3 6.300-6.800" fill="none" stroke="#3a3a3a" stroke-width="1.300"/>
<text x="934" y="359.200" fill="#111" letter-spacing="-0.15">Add as component</text>
<rect x="917.500" y="371.500" width="13" height="13" fill="#0000c8" stroke="#000" stroke-width="1.200"/>
<rect x="920" y="372" width="8" height="5.300" fill="#f4f4f4"/>
<rect x="920" y="379.500" width="8.500" height="5" fill="#000"/><rect x="925.800" y="380.500" width="1.800" height="3.300" fill="#f4f4f4"/>
<g fill="none" stroke="#000" stroke-width="1.100"><path d="M944.500 371.500v-1.500h4v1.500M941 372.500h11M942.300 374.500h8.400v10.500h-8.400zM944.500 375.500v9M946.500 375.500v9M948.500 375.500v9"/></g>
<path d="M940.500 377.500l1.500-1M952.500 377.500l-1.500-1" stroke="#000" stroke-width="1"/>
<path d="M1041.500 374.500a6 6 0 1 0 1.300 4.500" fill="none" stroke="#000" stroke-width="2"/>
<path d="M1043.800 370.500v6h-6z" fill="#000"/>
<circle cx="1060" cy="377.700" r="7" fill="#000"/><circle cx="1060" cy="377.700" r="2.200" fill="#f01818"/>
<path d="M1081.500 370v4h-2.800l4.300 4.300 4.300-4.300h-2.800v-4z" fill="#000"/>
<path d="M1078.500 381.500v-2.500h9.500v2.500" fill="none" stroke="#000" stroke-width="1.200"/>
<path d="M1075 382.500l2-1.500h12l2 1.500v2h-16z" fill="#000"/>
<text x="1095" y="383" fill="#111" textLength="19" lengthAdjust="spacingAndGlyphs">TOP</text>
<rect x="912" y="391" width="206.500" height="1" fill="#a0a0a0"/><rect x="912" y="392" width="1" height="30" fill="#a0a0a0"/>
<rect x="913" y="392" width="205.500" height="30" fill="#ebebeb"/>
<rect x="913" y="422" width="205.500" height="275" fill="#000"/>
<rect x="912" y="697" width="207" height="1" fill="#fff"/>
<rect x="926.7" y="481.200" width="10.600" height="25.200" fill="#2c6cf2"/><rect x="926.7" y="612.300" width="10.600" height="25.200" fill="#2c6cf2"/>
<rect x="941.8" y="481.200" width="10.600" height="25.200" fill="#2c6cf2"/><rect x="941.8" y="612.300" width="10.600" height="25.200" fill="#2c6cf2"/>
<rect x="957.0" y="481.200" width="10.600" height="25.200" fill="#2c6cf2"/><rect x="957.0" y="612.300" width="10.600" height="25.200" fill="#2c6cf2"/>
<rect x="972.1" y="481.200" width="10.600" height="25.200" fill="#2c6cf2"/><rect x="972.1" y="612.300" width="10.600" height="25.200" fill="#2c6cf2"/>
<rect x="987.2" y="481.200" width="10.600" height="25.200" fill="#2c6cf2"/><rect x="987.2" y="612.300" width="10.600" height="25.200" fill="#2c6cf2"/>
<rect x="1002.4" y="481.200" width="10.600" height="25.200" fill="#2c6cf2"/><rect x="1002.4" y="612.300" width="10.600" height="25.200" fill="#2c6cf2"/>
<rect x="1017.5" y="481.200" width="10.600" height="25.200" fill="#2c6cf2"/><rect x="1017.5" y="612.300" width="10.600" height="25.200" fill="#2c6cf2"/>
<rect x="1032.6" y="481.200" width="10.600" height="25.200" fill="#2c6cf2"/><rect x="1032.6" y="612.300" width="10.600" height="25.200" fill="#2c6cf2"/>
<rect x="1047.7" y="481.200" width="10.600" height="25.200" fill="#2c6cf2"/><rect x="1047.7" y="612.300" width="10.600" height="25.200" fill="#2c6cf2"/>
<rect x="1062.9" y="481.200" width="10.600" height="25.200" fill="#2c6cf2"/><rect x="1062.9" y="612.300" width="10.600" height="25.200" fill="#2c6cf2"/>
<rect x="1078.0" y="481.200" width="10.600" height="25.200" fill="#2c6cf2"/><rect x="1078.0" y="612.300" width="10.600" height="25.200" fill="#2c6cf2"/>
<rect x="1093.1" y="481.200" width="10.600" height="25.200" fill="#2c6cf2"/><rect x="1093.1" y="612.300" width="10.600" height="25.200" fill="#2c6cf2"/>
<rect x="923" y="513.300" width="183.500" height="92.500" fill="none" stroke="#e01818" stroke-width="2"/>
<rect x="923" y="518.300" width="7" height="82.500" fill="none" stroke="#e01818" stroke-width="1.500"/>
<path d="M1015.500 554.500v12M1009.500 560.500h12" stroke="#fff" stroke-width="1"/>
<text x="1114.300" y="691.500" text-anchor="end" fill="#f0f0f0" letter-spacing="-0.1">Drag and Drop</text>
</svg>
<div class="abs" style="left:14px;top:106px;width:1105px;height:1px;background:#fff"></div>
<div class="abs" style="left:14px;top:14px;width:1105px;height:722px;border:1px solid rgba(255,255,255,.85);pointer-events:none"></div>
</body>
</html>
